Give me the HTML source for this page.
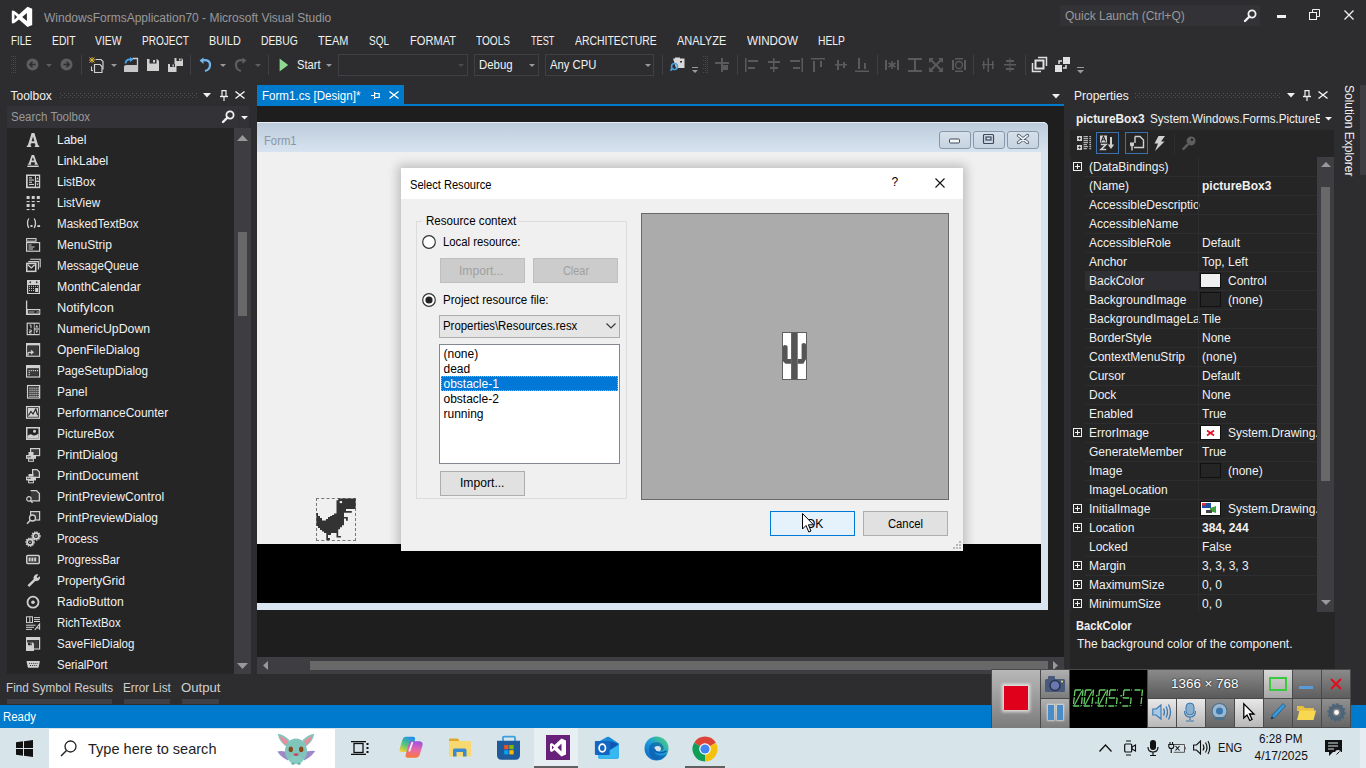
<!DOCTYPE html>
<html><head><meta charset="utf-8"><title>Visual Studio</title>
<style>
*{margin:0;padding:0;box-sizing:border-box}
html,body{width:1366px;height:768px;overflow:hidden;background:#2d2d30;font-family:"Liberation Sans",sans-serif;font-size:12px;color:#f1f1f1;position:relative}
.a{position:absolute}
.t{position:absolute;white-space:nowrap;line-height:1}
svg{position:absolute;overflow:visible}
</style></head><body>
<svg style="left:0px;top:0px;" width="40" height="30" viewBox="0 0 40 30"><path d="M11.8 11.6 Q11.8 10.6 12.9 10.6 L14.4 11 L19 14.6 L27.5 6.8 L32.2 8.8 V25.1 L27.5 27.1 L19 19.4 L14.4 23 L12.9 23.4 Q11.8 23.4 11.8 22.4 Z M14.5 14.3 V19.8 L17.1 17 Z M26.9 12.9 V21.1 L22.2 17 Z" fill="#ffffff" fill-rule="evenodd"/></svg>
<div class="t" style="left:44px;top:12.38px;font-size:12px;color:#999999;">WindowsFormsApplication70 - Microsoft Visual Studio</div>
<div class="a" style="left:1060px;top:5px;width:200px;height:21px;background:#333337;"></div>
<div class="t" style="left:1065px;top:9.58px;font-size:12px;color:#999999;">Quick Launch (Ctrl+Q)</div>
<svg style="left:1244px;top:9px;" width="13" height="13" viewBox="0 0 13 13"><circle cx="8" cy="5" r="3.6" fill="none" stroke="#f1f1f1" stroke-width="1.8"/><path d="M5.5 7.5 L1 12" stroke="#f1f1f1" stroke-width="2.4" stroke-linecap="round"/></svg>
<div class="a" style="left:1277px;top:15px;width:9px;height:3px;background:#f1f1f1;"></div>
<svg style="left:1309px;top:9px;" width="12" height="11" viewBox="0 0 12 11"><rect x="0.5" y="3.5" width="7" height="7" fill="none" stroke="#f1f1f1"/><path d="M3.5 3.5 V0.5 H10.5 V7.5 H7.5" fill="none" stroke="#f1f1f1"/></svg>
<svg style="left:1344px;top:10px;" width="10" height="10" viewBox="0 0 10 10"><path d="M0.5 0.5 L9.5 9.5 M9.5 0.5 L0.5 9.5" stroke="#f1f1f1" stroke-width="1.3"/></svg>
<div class="t" style="left:10.5px;top:34.68px;font-size:12px;color:#f1f1f1;transform:scaleX(0.813);transform-origin:0 0;">FILE</div>
<div class="t" style="left:51.5px;top:34.68px;font-size:12px;color:#f1f1f1;transform:scaleX(0.860);transform-origin:0 0;">EDIT</div>
<div class="t" style="left:94.5px;top:34.68px;font-size:12px;color:#f1f1f1;transform:scaleX(0.864);transform-origin:0 0;">VIEW</div>
<div class="t" style="left:142.1px;top:34.68px;font-size:12px;color:#f1f1f1;transform:scaleX(0.837);transform-origin:0 0;">PROJECT</div>
<div class="t" style="left:208.5px;top:34.68px;font-size:12px;color:#f1f1f1;transform:scaleX(0.897);transform-origin:0 0;">BUILD</div>
<div class="t" style="left:260.5px;top:34.68px;font-size:12px;color:#f1f1f1;transform:scaleX(0.862);transform-origin:0 0;">DEBUG</div>
<div class="t" style="left:318.1px;top:34.68px;font-size:12px;color:#f1f1f1;transform:scaleX(0.912);transform-origin:0 0;">TEAM</div>
<div class="t" style="left:369.0px;top:34.68px;font-size:12px;color:#f1f1f1;transform:scaleX(0.833);transform-origin:0 0;">SQL</div>
<div class="t" style="left:409.7px;top:34.68px;font-size:12px;color:#f1f1f1;transform:scaleX(0.924);transform-origin:0 0;">FORMAT</div>
<div class="t" style="left:476.2px;top:34.68px;font-size:12px;color:#f1f1f1;transform:scaleX(0.840);transform-origin:0 0;">TOOLS</div>
<div class="t" style="left:531.3px;top:34.68px;font-size:12px;color:#f1f1f1;transform:scaleX(0.763);transform-origin:0 0;">TEST</div>
<div class="t" style="left:574.5px;top:34.68px;font-size:12px;color:#f1f1f1;transform:scaleX(0.870);transform-origin:0 0;">ARCHITECTURE</div>
<div class="t" style="left:676.8px;top:34.68px;font-size:12px;color:#f1f1f1;transform:scaleX(0.915);transform-origin:0 0;">ANALYZE</div>
<div class="t" style="left:746.5px;top:34.68px;font-size:12px;color:#f1f1f1;transform:scaleX(0.969);transform-origin:0 0;">WINDOW</div>
<div class="t" style="left:818.1px;top:34.68px;font-size:12px;color:#f1f1f1;transform:scaleX(0.861);transform-origin:0 0;">HELP</div>
<svg style="left:11px;top:56px;" width="7" height="18" viewBox="0 0 7 18"><rect x="0" y="0" width="1" height="1" fill="#4a4a4e"/><rect x="2" y="0" width="1" height="1" fill="#4a4a4e"/><rect x="4" y="0" width="1" height="1" fill="#4a4a4e"/><rect x="2" y="2" width="1" height="1" fill="#4a4a4e"/><rect x="4" y="2" width="1" height="1" fill="#4a4a4e"/><rect x="0" y="4" width="1" height="1" fill="#4a4a4e"/><rect x="2" y="4" width="1" height="1" fill="#4a4a4e"/><rect x="4" y="4" width="1" height="1" fill="#4a4a4e"/><rect x="2" y="6" width="1" height="1" fill="#4a4a4e"/><rect x="4" y="6" width="1" height="1" fill="#4a4a4e"/><rect x="0" y="8" width="1" height="1" fill="#4a4a4e"/><rect x="2" y="8" width="1" height="1" fill="#4a4a4e"/><rect x="4" y="8" width="1" height="1" fill="#4a4a4e"/><rect x="2" y="10" width="1" height="1" fill="#4a4a4e"/><rect x="4" y="10" width="1" height="1" fill="#4a4a4e"/><rect x="0" y="12" width="1" height="1" fill="#4a4a4e"/><rect x="2" y="12" width="1" height="1" fill="#4a4a4e"/><rect x="4" y="12" width="1" height="1" fill="#4a4a4e"/><rect x="2" y="14" width="1" height="1" fill="#4a4a4e"/><rect x="4" y="14" width="1" height="1" fill="#4a4a4e"/><rect x="0" y="16" width="1" height="1" fill="#4a4a4e"/><rect x="2" y="16" width="1" height="1" fill="#4a4a4e"/><rect x="4" y="16" width="1" height="1" fill="#4a4a4e"/></svg>
<svg style="left:26px;top:58px;" width="13" height="13" viewBox="0 0 13 13"><circle cx="6.5" cy="6.5" r="6" fill="#5e5e5e"/><path d="M9.5 6.5 H4 M6.5 3.8 L3.8 6.5 L6.5 9.2" stroke="#2d2d30" stroke-width="1.6" fill="none"/></svg>
<svg style="left:46px;top:64px;" width="6" height="3" viewBox="0 0 6 3"><path d="M0 0 H6 L3 3Z" fill="#5e5e5e"/></svg>
<svg style="left:60px;top:58px;" width="13" height="13" viewBox="0 0 13 13"><circle cx="6.5" cy="6.5" r="6" fill="#5e5e5e"/><path d="M3.5 6.5 H9 M6.5 3.8 L9.2 6.5 L6.5 9.2" stroke="#2d2d30" stroke-width="1.6" fill="none"/></svg>
<div class="a" style="left:81px;top:55px;width:1px;height:20px;background:#3f3f46;"></div>
<div class="a" style="left:190px;top:55px;width:1px;height:20px;background:#3f3f46;"></div>
<div class="a" style="left:268px;top:55px;width:1px;height:20px;background:#3f3f46;"></div>
<div class="a" style="left:662px;top:55px;width:1px;height:20px;background:#3f3f46;"></div>
<div class="a" style="left:737px;top:55px;width:1px;height:20px;background:#3f3f46;"></div>
<div class="a" style="left:877px;top:55px;width:1px;height:20px;background:#3f3f46;"></div>
<div class="a" style="left:973px;top:55px;width:1px;height:20px;background:#3f3f46;"></div>
<div class="a" style="left:1025px;top:55px;width:1px;height:20px;background:#3f3f46;"></div>
<svg style="left:89px;top:57px;" width="15" height="16" viewBox="0 0 15 16"><path d="M6.5 2.5 H12 L14 4.5 V12.5" fill="none" stroke="#d0d0d0" stroke-width="1.2"/><path d="M5.5 7.5 H11 L13 9.5 V15.5 H5.5Z" fill="#2d2d30" stroke="#d0d0d0" stroke-width="1.2"/><path d="M2.5 9.5 V13.5 H4" fill="none" stroke="#d0d0d0" stroke-width="1.1"/><path d="M0.5 0.5 L5.5 5.5 M5.5 0.5 L0.5 5.5 M3 0 V6 M0 3 H6" stroke="#e8b838" stroke-width="0.9"/></svg>
<svg style="left:111px;top:64px;" width="6" height="3" viewBox="0 0 6 3"><path d="M0 0 H6 L3 3Z" fill="#999999"/></svg>
<svg style="left:124px;top:57px;" width="15" height="15" viewBox="0 0 15 15"><path d="M8.5 1.5 H13.5 V14.5" fill="none" stroke="#d0d0d0" stroke-width="1.3"/><path d="M0 9 L2 8 H14 V15 H0Z" fill="#c8c8c8"/><path d="M1.5 6.5 Q2 2 7 2.5" fill="none" stroke="#4aa8f0" stroke-width="1.8"/><path d="M6 0 L9.5 2.6 L6 5Z" fill="#4aa8f0"/></svg>
<svg style="left:147px;top:59px;" width="12" height="12" viewBox="0 0 12 12"><path d="M0 0 H10 L12 2 V12 H0Z" fill="#d0d0d0"/><rect x="2.5" y="0" width="7" height="4.5" fill="#2d2d30"/><rect x="6" y="1" width="2" height="2.5" fill="#d0d0d0"/></svg>
<svg style="left:168px;top:58px;" width="15" height="14" viewBox="0 0 15 14"><path d="M6.5 0 H13.5 L15 1.5 V8 H6.5Z" fill="#d0d0d0"/><rect x="8.5" y="0" width="5" height="3" fill="#2d2d30"/><rect x="11" y="0.5" width="1.5" height="2" fill="#d0d0d0"/><path d="M0 6 H7 L8.5 7.5 V14 H0Z" fill="#d0d0d0"/><rect x="2" y="6" width="5" height="3" fill="#2d2d30"/><rect x="4.5" y="6.5" width="1.5" height="2" fill="#d0d0d0"/></svg>
<svg style="left:199px;top:58px;" width="13" height="14" viewBox="0 0 13 14"><path d="M3 2.5 Q11.5 1 11 7.5 Q10.5 12 6 13" fill="none" stroke="#72b8ee" stroke-width="2.2"/><path d="M0.5 2.5 L4.5 -0.5 L4.5 6Z" fill="#72b8ee"/></svg>
<svg style="left:220px;top:64px;" width="6" height="3" viewBox="0 0 6 3"><path d="M0 0 H6 L3 3Z" fill="#999999"/></svg>
<svg style="left:234px;top:58px;" width="13" height="14" viewBox="0 0 13 14"><path d="M10 2.5 Q1.5 1 2 7.5 Q2.5 12 7 13" fill="none" stroke="#5e5e5e" stroke-width="2.2"/><path d="M12.5 2.5 L8.5 -0.5 L8.5 6Z" fill="#5e5e5e"/></svg>
<svg style="left:255px;top:64px;" width="6" height="3" viewBox="0 0 6 3"><path d="M0 0 H6 L3 3Z" fill="#5e5e5e"/></svg>
<svg style="left:279px;top:58px;" width="10" height="14" viewBox="0 0 10 14"><path d="M0.6 0.6 L9.2 7 L0.6 13.4Z" fill="#8fd88f"/></svg>
<div class="t" style="left:296.5px;top:59.08px;font-size:12px;color:#f1f1f1;transform:scaleX(0.927);transform-origin:0 0;">Start</div>
<svg style="left:326px;top:64px;" width="6" height="3" viewBox="0 0 6 3"><path d="M0 0 H6 L3 3Z" fill="#999999"/></svg>
<div class="a" style="left:338px;top:54px;width:130px;height:22px;background:#2d2d30;border:1px solid #3f3f46;"></div>
<div class="a" style="left:474px;top:54px;width:65px;height:22px;background:#2d2d30;border:1px solid #3f3f46;"></div>
<div class="a" style="left:545px;top:54px;width:109px;height:22px;background:#2d2d30;border:1px solid #3f3f46;"></div>
<svg style="left:458px;top:64px;" width="6" height="3" viewBox="0 0 6 3"><path d="M0 0 H6 L3 3Z" fill="#4a4a4e"/></svg>
<div class="t" style="left:479px;top:59.08px;font-size:12px;color:#f1f1f1;transform:scaleX(0.950);transform-origin:0 0;">Debug</div>
<svg style="left:529px;top:64px;" width="6" height="3" viewBox="0 0 6 3"><path d="M0 0 H6 L3 3Z" fill="#999999"/></svg>
<div class="t" style="left:549.5px;top:59.08px;font-size:12px;color:#f1f1f1;transform:scaleX(0.938);transform-origin:0 0;">Any CPU</div>
<svg style="left:645px;top:64px;" width="6" height="3" viewBox="0 0 6 3"><path d="M0 0 H6 L3 3Z" fill="#999999"/></svg>
<svg style="left:670px;top:57px;" width="15" height="15" viewBox="0 0 15 15"><path d="M3 1.5 H14.5 V11 H6" fill="#d8d8d8"/><path d="M5 0.5 H10 V3 H5Z" fill="#d8d8d8"/><rect x="10" y="4" width="2" height="1.5" fill="#2d2d30"/><circle cx="4.5" cy="9.5" r="3" fill="none" stroke="#4a9ee0" stroke-width="1.6"/><path d="M2.5 11.5 L0.5 13.5" stroke="#4a9ee0" stroke-width="2"/></svg>
<svg style="left:692px;top:67px;" width="6" height="7" viewBox="0 0 6 7"><rect x="0" y="0" width="6" height="1" fill="#999"/><path d="M0 3 H6 L3 6Z" fill="#999999"/></svg>
<svg style="left:703px;top:56px;" width="7" height="18" viewBox="0 0 7 18"><rect x="0" y="0" width="1" height="1" fill="#4a4a4e"/><rect x="2" y="0" width="1" height="1" fill="#4a4a4e"/><rect x="4" y="0" width="1" height="1" fill="#4a4a4e"/><rect x="2" y="2" width="1" height="1" fill="#4a4a4e"/><rect x="4" y="2" width="1" height="1" fill="#4a4a4e"/><rect x="0" y="4" width="1" height="1" fill="#4a4a4e"/><rect x="2" y="4" width="1" height="1" fill="#4a4a4e"/><rect x="4" y="4" width="1" height="1" fill="#4a4a4e"/><rect x="2" y="6" width="1" height="1" fill="#4a4a4e"/><rect x="4" y="6" width="1" height="1" fill="#4a4a4e"/><rect x="0" y="8" width="1" height="1" fill="#4a4a4e"/><rect x="2" y="8" width="1" height="1" fill="#4a4a4e"/><rect x="4" y="8" width="1" height="1" fill="#4a4a4e"/><rect x="2" y="10" width="1" height="1" fill="#4a4a4e"/><rect x="4" y="10" width="1" height="1" fill="#4a4a4e"/><rect x="0" y="12" width="1" height="1" fill="#4a4a4e"/><rect x="2" y="12" width="1" height="1" fill="#4a4a4e"/><rect x="4" y="12" width="1" height="1" fill="#4a4a4e"/><rect x="2" y="14" width="1" height="1" fill="#4a4a4e"/><rect x="4" y="14" width="1" height="1" fill="#4a4a4e"/><rect x="0" y="16" width="1" height="1" fill="#4a4a4e"/><rect x="2" y="16" width="1" height="1" fill="#4a4a4e"/><rect x="4" y="16" width="1" height="1" fill="#4a4a4e"/></svg>
<svg style="left:715px;top:58px;" width="14" height="14" viewBox="0 0 14 14"><rect x="6" y="0" width="2" height="14" fill="#5a5a5a"/><rect x="0" y="4" width="14" height="2" fill="#5a5a5a"/><rect x="8" y="7" width="5" height="5" fill="#5a5a5a"/></svg>
<svg style="left:745px;top:58px;" width="14" height="14" viewBox="0 0 14 14"><rect x="0" y="0" width="1.5" height="14" fill="#5a5a5a"/><rect x="3" y="2" width="10" height="2" fill="#5a5a5a"/><rect x="3" y="9" width="7" height="2" fill="#5a5a5a"/></svg>
<svg style="left:767px;top:58px;" width="14" height="14" viewBox="0 0 14 14"><rect x="6" y="0" width="1.5" height="14" fill="#5a5a5a"/><rect x="1" y="3" width="12" height="2" fill="#5a5a5a"/><rect x="3" y="9" width="8" height="2" fill="#5a5a5a"/></svg>
<svg style="left:789px;top:58px;" width="14" height="14" viewBox="0 0 14 14"><rect x="12.5" y="0" width="1.5" height="14" fill="#5a5a5a"/><rect x="1" y="2" width="10" height="2" fill="#5a5a5a"/><rect x="4" y="9" width="7" height="2" fill="#5a5a5a"/></svg>
<svg style="left:811px;top:58px;" width="14" height="14" viewBox="0 0 14 14"><rect x="0" y="0" width="14" height="1.5" fill="#5a5a5a"/><rect x="2" y="3" width="2" height="11" fill="#5a5a5a"/><rect x="9" y="3" width="2" height="6" fill="#5a5a5a"/></svg>
<svg style="left:835px;top:58px;" width="12" height="14" viewBox="0 0 12 14"><rect x="0" y="6" width="12" height="1.5" fill="#5a5a5a"/><rect x="2" y="2" width="2" height="10" fill="#5a5a5a"/><rect x="8" y="4" width="2" height="6" fill="#5a5a5a"/></svg>
<svg style="left:855px;top:58px;" width="14" height="14" viewBox="0 0 14 14"><rect x="0" y="12.5" width="14" height="1.5" fill="#5a5a5a"/><rect x="3" y="0" width="2" height="11" fill="#5a5a5a"/><rect x="9" y="5" width="2" height="6" fill="#5a5a5a"/></svg>
<svg style="left:885px;top:58px;" width="14" height="14" viewBox="0 0 14 14"><rect x="0" y="2" width="2" height="10" fill="#5a5a5a"/><rect x="12" y="2" width="2" height="10" fill="#5a5a5a"/><path d="M7 3 V11 M3.5 5 L10.5 9 M10.5 5 L3.5 9" stroke="#5a5a5a" stroke-width="1.6"/></svg>
<svg style="left:908px;top:58px;" width="14" height="14" viewBox="0 0 14 14"><rect x="0" y="0" width="14" height="2" fill="#5a5a5a"/><rect x="0" y="12" width="14" height="2" fill="#5a5a5a"/><rect x="6" y="2" width="2" height="10" fill="#5a5a5a"/></svg>
<svg style="left:929px;top:58px;" width="14" height="14" viewBox="0 0 14 14"><path d="M1 1 L13 13 M13 1 L1 13" stroke="#5a5a5a" stroke-width="2"/><path d="M0 0 H5 L0 5Z M14 0 V5 L9 0Z M0 14 V9 L5 14Z M14 14 H9 L14 9Z" fill="#5a5a5a"/></svg>
<svg style="left:952px;top:58px;" width="14" height="14" viewBox="0 0 14 14"><rect x="0" y="2" width="2" height="10" fill="#5a5a5a"/><rect x="12" y="2" width="2" height="10" fill="#5a5a5a"/><rect x="3" y="0" width="8" height="1.5" fill="#5a5a5a"/><rect x="3" y="12.5" width="8" height="1.5" fill="#5a5a5a"/><circle cx="7" cy="7" r="3.5" fill="none" stroke="#5a5a5a" stroke-width="1.3"/></svg>
<svg style="left:982px;top:58px;" width="12" height="14" viewBox="0 0 12 14"><rect x="5.5" y="0" width="1.5" height="14" fill="#5a5a5a"/><rect x="1" y="3" width="1.5" height="8" fill="#5a5a5a"/><rect x="10" y="3" width="1.5" height="8" fill="#5a5a5a"/><rect x="0" y="6" width="12" height="1.2" fill="#5a5a5a"/></svg>
<svg style="left:1004px;top:58px;" width="12" height="14" viewBox="0 0 12 14"><rect x="0" y="6" width="12" height="1.5" fill="#5a5a5a"/><rect x="2" y="2" width="8" height="2" fill="#5a5a5a"/><rect x="2" y="10" width="8" height="2" fill="#5a5a5a"/><rect x="5.5" y="0" width="1" height="14" fill="#5a5a5a"/></svg>
<svg style="left:1032px;top:57px;" width="15" height="15" viewBox="0 0 15 15"><rect x="3.5" y="3.5" width="8" height="8" fill="none" stroke="#e0e0e0" stroke-width="2"/><path d="M6 0.5 H14.5 V9" fill="none" stroke="#e0e0e0" stroke-width="1.5"/><path d="M0.5 6 V14.5 H9" fill="none" stroke="#e0e0e0" stroke-width="1.5"/></svg>
<svg style="left:1055px;top:57px;" width="15" height="15" viewBox="0 0 15 15"><rect x="8" y="0" width="7" height="7" fill="#e0e0e0"/><rect x="0" y="8" width="7" height="7" fill="#e0e0e0"/><path d="M4 7 V4 H7 M8 11 H11 V8" fill="none" stroke="#e0e0e0" stroke-width="1.5"/></svg>
<svg style="left:1077px;top:67px;" width="7" height="7" viewBox="0 0 7 7"><rect x="0" y="0" width="7" height="1" fill="#999"/><path d="M0 3 H7 L3.5 6.5Z" fill="#999999"/></svg>
<div class="t" style="left:10.5px;top:90.08px;font-size:12px;color:#f1f1f1;">Toolbox</div>
<svg style="left:60px;top:93px" width="137" height="5"><defs><pattern id="gp1" x="0" y="0" width="4" height="4" patternUnits="userSpaceOnUse"><rect x="0" y="0" width="1" height="1" fill="#55555a"/><rect x="2" y="2" width="1" height="1" fill="#55555a"/></pattern></defs><rect x="0" y="0" width="137" height="5" fill="url(#gp1)"/></svg>
<svg style="left:203px;top:93px;" width="8" height="5" viewBox="0 0 8 5"><path d="M0 0 H8 L4 4.5Z" fill="#f1f1f1"/></svg>
<svg style="left:220px;top:90px;" width="8" height="11" viewBox="0 0 8 11"><path d="M2 0.6 H6 V6.5 H2Z" fill="none" stroke="#f1f1f1" stroke-width="1.2"/><rect x="0" y="5.8" width="8" height="1.4" fill="#f1f1f1"/><rect x="3.4" y="7" width="1.2" height="4" fill="#f1f1f1"/></svg>
<svg style="left:235px;top:91px;" width="10" height="8" viewBox="0 0 10 8"><path d="M0.5 0.5 L9.5 7.5 M9.5 0.5 L0.5 7.5" stroke="#f1f1f1" stroke-width="1.5"/></svg>
<div class="a" style="left:7px;top:106px;width:242px;height:22px;background:#333337;"></div>
<div class="t" style="left:11px;top:111.08px;font-size:12px;color:#999999;transform:scaleX(0.958);transform-origin:0 0;">Search Toolbox</div>
<svg style="left:222px;top:110px;" width="13" height="13" viewBox="0 0 13 13"><circle cx="8" cy="5" r="3.6" fill="none" stroke="#f1f1f1" stroke-width="1.8"/><path d="M5.5 7.5 L1 12" stroke="#f1f1f1" stroke-width="2.4" stroke-linecap="round"/></svg>
<div class="a" style="left:238px;top:108px;width:1px;height:18px;background:#2d2d30;"></div>
<svg style="left:241px;top:116px;" width="7" height="4" viewBox="0 0 7 4"><path d="M0 0 H7 L3.5 3.5Z" fill="#f1f1f1"/></svg>
<div class="a" style="left:7px;top:128px;width:227px;height:546px;background:#252526;overflow:hidden">
<svg style="left:19px;top:4px" width="14" height="14" viewBox="0 0 14 14"><path d="M0.8 15 V13.6 H1.8 L5.6 1 H8.4 L12.2 13.6 H13.2 V15 H8.8 V13.6 H9.6 L8.9 11.2 H5.1 L4.4 13.6 H5.2 V15Z M5.6 9.2 H8.4 L7 4.4Z" fill="#d0d0d0" fill-rule="evenodd"/></svg>
<div class="t" style="left:50px;top:6.08px;font-size:12px;color:#f1f1f1;transform:scaleX(1.0);transform-origin:0 0">Label</div>
<svg style="left:19px;top:25px" width="14" height="14" viewBox="0 0 14 14"><path d="M1.8 11.8 V10.8 H2.6 L5.7 2 H8.1 L11.2 10.8 H12 V11.8 H8.6 V10.8 H9.1 L8.6 9.2 H5.2 L4.7 10.8 H5.2 V11.8Z M5.7 7.6 H8.1 L6.9 3.9Z" fill="#d0d0d0" fill-rule="evenodd"/><rect x="1.3" y="12.6" width="11.4" height="1.4" fill="#d0d0d0"/></svg>
<div class="t" style="left:50px;top:27.08px;font-size:12px;color:#f1f1f1;transform:scaleX(0.998);transform-origin:0 0">LinkLabel</div>
<svg style="left:19px;top:46px" width="14" height="14" viewBox="0 0 14 14"><rect x="0" y="0.5" width="14.2" height="13.7" fill="#d0d0d0"/><rect x="1.7" y="2" width="7.2" height="10.6" fill="#252526"/><rect x="3" y="3.3" width="3" height="1.1" fill="#d0d0d0"/><rect x="3" y="5.5" width="5" height="1.1" fill="#d0d0d0"/><rect x="3" y="7.7" width="3" height="1.1" fill="#d0d0d0"/><rect x="3" y="9.9" width="5" height="1.1" fill="#d0d0d0"/><rect x="10" y="2" width="2.9" height="4.6" fill="#252526"/><rect x="10" y="8" width="2.9" height="4.6" fill="#252526"/><path d="M10.3 5.2 L11.45 3.2 L12.6 5.2Z M10.3 9.4 L11.45 11.4 L12.6 9.4Z" fill="#d0d0d0"/></svg>
<div class="t" style="left:50px;top:48.08px;font-size:12px;color:#f1f1f1;transform:scaleX(0.973);transform-origin:0 0">ListBox</div>
<svg style="left:19px;top:67px" width="14" height="14" viewBox="0 0 14 14"><rect x="0.6" y="1" width="3" height="3" fill="#d0d0d0"/><rect x="0.6" y="6" width="3" height="1.1" fill="#d0d0d0"/><rect x="5.699999999999999" y="1" width="3" height="3" fill="#d0d0d0"/><rect x="5.699999999999999" y="6" width="3" height="1.1" fill="#d0d0d0"/><rect x="10.799999999999999" y="1" width="3" height="3" fill="#d0d0d0"/><rect x="10.799999999999999" y="6" width="3" height="1.1" fill="#d0d0d0"/><rect x="0.6" y="9" width="3" height="3" fill="#d0d0d0"/><rect x="0.6" y="14" width="3" height="1.1" fill="#d0d0d0"/><rect x="5.699999999999999" y="9" width="3" height="3" fill="#d0d0d0"/><rect x="5.699999999999999" y="14" width="3" height="1.1" fill="#d0d0d0"/></svg>
<div class="t" style="left:50px;top:69.08px;font-size:12px;color:#f1f1f1;transform:scaleX(0.968);transform-origin:0 0">ListView</div>
<svg style="left:19px;top:88px" width="14" height="14" viewBox="0 0 14 14"><path d="M2.8 2.5 Q0.2 7 2.8 12" fill="none" stroke="#d0d0d0" stroke-width="1.3"/><path d="M8.2 2.5 Q10.8 7 8.2 12" fill="none" stroke="#d0d0d0" stroke-width="1.3"/><rect x="4.5" y="9" width="2" height="2" fill="#d0d0d0"/><rect x="11.3" y="9.2" width="2.8" height="1.8" fill="#d0d0d0"/></svg>
<div class="t" style="left:50px;top:90.08px;font-size:12px;color:#f1f1f1;transform:scaleX(0.963);transform-origin:0 0">MaskedTextBox</div>
<svg style="left:19px;top:109px" width="14" height="14" viewBox="0 0 14 14"><rect x="0.6" y="1.6" width="9.4" height="2.6" fill="none" stroke="#d0d0d0" stroke-width="1.1"/><rect x="0.6" y="5.6" width="13" height="8.6" fill="none" stroke="#d0d0d0" stroke-width="1.2"/><rect x="2.5" y="7.5" width="3" height="1" fill="#d0d0d0"/><rect x="2.5" y="9.5" width="6" height="1" fill="#d0d0d0"/><rect x="2.5" y="11.5" width="4.5" height="1" fill="#d0d0d0"/></svg>
<div class="t" style="left:50px;top:111.08px;font-size:12px;color:#f1f1f1;transform:scaleX(1.004);transform-origin:0 0">MenuStrip</div>
<svg style="left:19px;top:130px" width="14" height="14" viewBox="0 0 14 14"><path d="M4.2 1.2 H14.2 V9.4 M2.2 3.6 H12.4 V11.4" fill="none" stroke="#d0d0d0" stroke-width="1.1"/><rect x="0" y="4.7" width="10.5" height="9.4" fill="#d0d0d0"/><rect x="1.5" y="6.2" width="7.5" height="6.4" fill="#252526"/><path d="M1.8 6.8 L5.25 10 L8.7 6.8" fill="none" stroke="#d0d0d0" stroke-width="1.2"/></svg>
<div class="t" style="left:50px;top:132.08px;font-size:12px;color:#f1f1f1;transform:scaleX(0.963);transform-origin:0 0">MessageQueue</div>
<svg style="left:19px;top:151px" width="14" height="14" viewBox="0 0 14 14"><rect x="1" y="1" width="13" height="14" fill="#d0d0d0"/><rect x="2.2" y="6" width="10.6" height="8" fill="#252526"/><path d="M3 3.3 L5 2 V4.6Z M12 3.3 L10 2 V4.6Z" fill="#3a3a3a"/><rect x="3" y="6.8" width="1" height="1" fill="#d0d0d0"/><rect x="3" y="8.9" width="1" height="1" fill="#d0d0d0"/><rect x="3" y="11.0" width="1" height="1" fill="#d0d0d0"/><rect x="5" y="6.8" width="1" height="1" fill="#d0d0d0"/><rect x="5" y="8.9" width="1" height="1" fill="#d0d0d0"/><rect x="5" y="11.0" width="1" height="1" fill="#d0d0d0"/><rect x="7" y="6.8" width="1" height="1" fill="#d0d0d0"/><rect x="7" y="8.9" width="1" height="1" fill="#d0d0d0"/><rect x="7" y="11.0" width="1" height="1" fill="#d0d0d0"/><rect x="9" y="6.8" width="1" height="1" fill="#d0d0d0"/><rect x="11" y="6.8" width="1" height="1" fill="#d0d0d0"/><rect x="9.2" y="9" width="3" height="4" fill="#d0d0d0"/></svg>
<div class="t" style="left:50px;top:153.08px;font-size:12px;color:#f1f1f1;transform:scaleX(1.021);transform-origin:0 0">MonthCalendar</div>
<svg style="left:19px;top:172px" width="14" height="14" viewBox="0 0 14 14"><path d="M0.6 0.5 V14.4 H14" fill="none" stroke="#d0d0d0" stroke-width="1.3"/><rect x="1.3" y="9.6" width="12.4" height="4.6" fill="none" stroke="#d0d0d0" stroke-width="1.2"/><rect x="2.5" y="11" width="6" height="2" fill="#6a6a6a"/><rect x="10.5" y="11" width="3" height="2" fill="#6a6a6a"/></svg>
<div class="t" style="left:50px;top:174.08px;font-size:12px;color:#f1f1f1;transform:scaleX(1.064);transform-origin:0 0">NotifyIcon</div>
<svg style="left:19px;top:193px" width="14" height="14" viewBox="0 0 14 14"><rect x="0.6" y="1.6" width="13" height="12.6" fill="#d0d0d0"/><rect x="1.8" y="2.8" width="6" height="10.2" fill="#252526"/><rect x="8.6" y="2.8" width="4.4" height="4.6" fill="#252526"/><rect x="8.6" y="8.6" width="4.4" height="4.4" fill="#252526"/><path d="M3.6 4 H5 V7.2 M3.3 9 H5.3 V10.6 H3.5 V12 H5.5" fill="none" stroke="#d0d0d0" stroke-width="1"/><path d="M9.4 6.4 L10.8 3.8 L12.2 6.4Z M9.4 9.6 L10.8 12.2 L12.2 9.6Z" fill="#d0d0d0"/></svg>
<div class="t" style="left:50px;top:195.08px;font-size:12px;color:#f1f1f1;transform:scaleX(1.027);transform-origin:0 0">NumericUpDown</div>
<svg style="left:19px;top:214px" width="14" height="14" viewBox="0 0 14 14"><rect x="0.6" y="1.6" width="13" height="12.6" fill="none" stroke="#d0d0d0" stroke-width="1.2"/><rect x="0.6" y="1.6" width="13" height="2" fill="#d0d0d0"/><rect x="1.8" y="3.6" width="10.6" height="9.4" fill="#3a3a3a"/><path d="M2 13.5 V11.3 Q2 10.3 3 10.3 H6.5 M5 8.6 L7 10.3 L5 12" fill="none" stroke="#d0d0d0" stroke-width="1.3"/></svg>
<div class="t" style="left:50px;top:216.08px;font-size:12px;color:#f1f1f1;transform:scaleX(0.999);transform-origin:0 0">OpenFileDialog</div>
<svg style="left:19px;top:235px" width="14" height="14" viewBox="0 0 14 14"><rect x="0.6" y="2.6" width="13" height="11.4" fill="none" stroke="#d0d0d0" stroke-width="1.2"/><rect x="0.6" y="2.6" width="13" height="2.8" fill="#d0d0d0"/><rect x="1.8" y="5.4" width="10.6" height="7.4" fill="#3a3a3a"/><rect x="2.6" y="7" width="1.2" height="1.2" fill="#d0d0d0"/><rect x="4.7" y="7" width="1.2" height="1.2" fill="#d0d0d0"/><rect x="6.800000000000001" y="7" width="1.2" height="1.2" fill="#d0d0d0"/><rect x="8.9" y="7" width="1.2" height="1.2" fill="#d0d0d0"/><rect x="11.0" y="7" width="1.2" height="1.2" fill="#d0d0d0"/><rect x="2.6" y="9" width="1.2" height="1.2" fill="#d0d0d0"/><rect x="2.6" y="11" width="1.2" height="1.2" fill="#d0d0d0"/></svg>
<div class="t" style="left:50px;top:237.08px;font-size:12px;color:#f1f1f1;transform:scaleX(0.974);transform-origin:0 0">PageSetupDialog</div>
<svg style="left:19px;top:256px" width="14" height="14" viewBox="0 0 14 14"><rect x="1.6" y="1.6" width="12" height="12.4" fill="none" stroke="#d0d0d0" stroke-width="1.3"/><rect x="2.3" y="2.3" width="10.6" height="11" fill="#3a3a3a"/><rect x="3.4" y="3.6" width="1.2" height="1.2" fill="#d0d0d0"/><rect x="3.4" y="5.65" width="1.2" height="1.2" fill="#d0d0d0"/><rect x="3.4" y="7.699999999999999" width="1.2" height="1.2" fill="#d0d0d0"/><rect x="3.4" y="9.75" width="1.2" height="1.2" fill="#d0d0d0"/><rect x="3.4" y="11.799999999999999" width="1.2" height="1.2" fill="#d0d0d0"/><rect x="5.449999999999999" y="3.6" width="1.2" height="1.2" fill="#d0d0d0"/><rect x="5.449999999999999" y="5.65" width="1.2" height="1.2" fill="#d0d0d0"/><rect x="5.449999999999999" y="7.699999999999999" width="1.2" height="1.2" fill="#d0d0d0"/><rect x="5.449999999999999" y="9.75" width="1.2" height="1.2" fill="#d0d0d0"/><rect x="5.449999999999999" y="11.799999999999999" width="1.2" height="1.2" fill="#d0d0d0"/><rect x="7.5" y="3.6" width="1.2" height="1.2" fill="#d0d0d0"/><rect x="7.5" y="5.65" width="1.2" height="1.2" fill="#d0d0d0"/><rect x="7.5" y="7.699999999999999" width="1.2" height="1.2" fill="#d0d0d0"/><rect x="7.5" y="9.75" width="1.2" height="1.2" fill="#d0d0d0"/><rect x="7.5" y="11.799999999999999" width="1.2" height="1.2" fill="#d0d0d0"/><rect x="9.549999999999999" y="3.6" width="1.2" height="1.2" fill="#d0d0d0"/><rect x="9.549999999999999" y="5.65" width="1.2" height="1.2" fill="#d0d0d0"/><rect x="9.549999999999999" y="7.699999999999999" width="1.2" height="1.2" fill="#d0d0d0"/><rect x="9.549999999999999" y="9.75" width="1.2" height="1.2" fill="#d0d0d0"/><rect x="9.549999999999999" y="11.799999999999999" width="1.2" height="1.2" fill="#d0d0d0"/><rect x="11.6" y="3.6" width="1.2" height="1.2" fill="#d0d0d0"/><rect x="11.6" y="5.65" width="1.2" height="1.2" fill="#d0d0d0"/><rect x="11.6" y="7.699999999999999" width="1.2" height="1.2" fill="#d0d0d0"/><rect x="11.6" y="9.75" width="1.2" height="1.2" fill="#d0d0d0"/><rect x="11.6" y="11.799999999999999" width="1.2" height="1.2" fill="#d0d0d0"/></svg>
<div class="t" style="left:50px;top:258.08px;font-size:12px;color:#f1f1f1;transform:scaleX(0.989);transform-origin:0 0">Panel</div>
<svg style="left:19px;top:277px" width="14" height="14" viewBox="0 0 14 14"><rect x="0.6" y="1.6" width="12.8" height="11.6" fill="none" stroke="#d0d0d0" stroke-width="1.3"/><rect x="2" y="3" width="10" height="8.8" fill="#d0d0d0"/><path d="M2.4 10.5 L5 6.5 L7 9 L9.8 4 L11.6 10" fill="none" stroke="#252526" stroke-width="1.2"/></svg>
<div class="t" style="left:50px;top:279.08px;font-size:12px;color:#f1f1f1;transform:scaleX(0.999);transform-origin:0 0">PerformanceCounter</div>
<svg style="left:19px;top:298px" width="14" height="14" viewBox="0 0 14 14"><rect x="0.75" y="1.75" width="12.5" height="11.5" fill="none" stroke="#d0d0d0" stroke-width="1.5"/><circle cx="8.5" cy="5.3" r="1.5" fill="#d0d0d0"/><path d="M1.5 10 Q4 7 6.5 9 Q9 10.5 12.5 7.5 V12.5 H1.5Z" fill="#d0d0d0"/></svg>
<div class="t" style="left:50px;top:300.08px;font-size:12px;color:#f1f1f1;transform:scaleX(0.986);transform-origin:0 0">PictureBox</div>
<svg style="left:19px;top:319px" width="14" height="14" viewBox="0 0 14 14"><rect x="4.6" y="1.6" width="9" height="7" fill="#3a3a3a" stroke="#d0d0d0" stroke-width="1.2"/><rect x="2.5" y="5" width="5" height="3" fill="#d0d0d0"/><rect x="0" y="8" width="10" height="3.8" fill="#d0d0d0"/><rect x="1.3" y="9.2" width="1.2" height="1.2" fill="#252526"/><rect x="3.3" y="9.2" width="1.2" height="1.2" fill="#252526"/><rect x="2.6" y="11.8" width="4.8" height="2.5" fill="none" stroke="#d0d0d0" stroke-width="1"/></svg>
<div class="t" style="left:50px;top:321.08px;font-size:12px;color:#f1f1f1;transform:scaleX(1.032);transform-origin:0 0">PrintDialog</div>
<svg style="left:19px;top:340px" width="14" height="14" viewBox="0 0 14 14"><path d="M6.6 7 V1.6 H11 L13.4 4 V9.4 H10" fill="#3a3a3a" stroke="#d0d0d0" stroke-width="1.2"/><rect x="2.5" y="6" width="5" height="2.6" fill="#d0d0d0"/><rect x="0" y="8.6" width="10" height="3.8" fill="#d0d0d0"/><rect x="1.3" y="9.8" width="1.2" height="1.2" fill="#252526"/><rect x="3.3" y="9.8" width="1.2" height="1.2" fill="#252526"/><rect x="2.6" y="12.4" width="4.8" height="2.4" fill="none" stroke="#d0d0d0" stroke-width="1"/></svg>
<div class="t" style="left:50px;top:342.08px;font-size:12px;color:#f1f1f1;transform:scaleX(1.027);transform-origin:0 0">PrintDocument</div>
<svg style="left:19px;top:361px" width="14" height="14" viewBox="0 0 14 14"><path d="M4.6 1.6 H10.5 L13.4 4.5 V11.8 H5.5" fill="#3a3a3a" stroke="#d0d0d0" stroke-width="1.3"/><circle cx="2.9" cy="9.9" r="2.2" fill="#252526" stroke="#d0d0d0" stroke-width="1.2"/><path d="M4.5 11.6 L6.6 13.8" stroke="#d0d0d0" stroke-width="1.5"/></svg>
<div class="t" style="left:50px;top:363.08px;font-size:12px;color:#f1f1f1;transform:scaleX(1.01);transform-origin:0 0">PrintPreviewControl</div>
<svg style="left:19px;top:382px" width="14" height="14" viewBox="0 0 14 14"><rect x="4.6" y="1.6" width="9" height="8.4" fill="#3a3a3a" stroke="#d0d0d0" stroke-width="1.2"/><circle cx="6.5" cy="8" r="3" fill="#252526" stroke="#d0d0d0" stroke-width="1.3"/><path d="M4.3 10.3 L1 13.8" stroke="#d0d0d0" stroke-width="1.5"/></svg>
<div class="t" style="left:50px;top:384.08px;font-size:12px;color:#f1f1f1;transform:scaleX(0.996);transform-origin:0 0">PrintPreviewDialog</div>
<svg style="left:19px;top:403px" width="14" height="14" viewBox="0 0 14 14"><circle cx="10" cy="5" r="2.9" fill="none" stroke="#d0d0d0" stroke-width="1.8"/><circle cx="10" cy="5" r="4" fill="none" stroke="#d0d0d0" stroke-width="1.4" stroke-dasharray="1.3 1.05"/><circle cx="4" cy="11.2" r="2.9" fill="none" stroke="#d0d0d0" stroke-width="1.8"/><circle cx="4" cy="11.2" r="4" fill="none" stroke="#d0d0d0" stroke-width="1.4" stroke-dasharray="1.3 1.05"/><circle cx="10" cy="5" r="0.8" fill="#d0d0d0"/><circle cx="4" cy="11.2" r="0.8" fill="#d0d0d0"/></svg>
<div class="t" style="left:50px;top:405.08px;font-size:12px;color:#f1f1f1;transform:scaleX(0.952);transform-origin:0 0">Process</div>
<svg style="left:19px;top:424px" width="14" height="14" viewBox="0 0 14 14"><rect x="0.75" y="3.55" width="12.5" height="8" rx="1" fill="none" stroke="#d0d0d0" stroke-width="1.5"/><rect x="2.2" y="5" width="9.6" height="5.1" fill="#3a3a3a"/><rect x="2.6" y="5.6" width="2" height="3.8" fill="#d0d0d0"/><rect x="5.4" y="5.6" width="2" height="3.8" fill="#d0d0d0"/><rect x="8.2" y="5.6" width="2" height="3.8" fill="#d0d0d0"/></svg>
<div class="t" style="left:50px;top:426.08px;font-size:12px;color:#f1f1f1;transform:scaleX(0.942);transform-origin:0 0">ProgressBar</div>
<svg style="left:19px;top:445px" width="14" height="14" viewBox="0 0 14 14"><path d="M12.3 1.5 A3.8 3.8 0 0 0 7.6 6.2 L1.5 12.3 L3.2 14 L9.3 7.9 A3.8 3.8 0 0 0 14 3.2 L11.6 4.9 L10.6 3.9Z" fill="#d0d0d0"/></svg>
<div class="t" style="left:50px;top:447.08px;font-size:12px;color:#f1f1f1;transform:scaleX(0.997);transform-origin:0 0">PropertyGrid</div>
<svg style="left:19px;top:466px" width="14" height="14" viewBox="0 0 14 14"><circle cx="7" cy="8.2" r="5.5" fill="none" stroke="#d0d0d0" stroke-width="1.8"/><circle cx="7" cy="8.2" r="1.8" fill="#d0d0d0"/></svg>
<div class="t" style="left:50px;top:468.08px;font-size:12px;color:#f1f1f1;transform:scaleX(1.009);transform-origin:0 0">RadioButton</div>
<svg style="left:19px;top:487px" width="14" height="14" viewBox="0 0 14 14"><rect x="0.5" y="1.8" width="6" height="5.8" fill="none" stroke="#d0d0d0" stroke-width="1"/><rect x="3.3" y="1.8" width="1" height="5.8" fill="#d0d0d0"/><rect x="8" y="2.1" width="6" height="1" fill="#d0d0d0"/><rect x="8" y="4.1" width="6" height="1" fill="#d0d0d0"/><rect x="8" y="6" width="6" height="1" fill="#d0d0d0"/><rect x="0" y="9.7" width="9.6" height="1" fill="#d0d0d0"/><rect x="0" y="11.8" width="8" height="1" fill="#d0d0d0"/><rect x="0" y="13.9" width="6" height="1" fill="#d0d0d0"/><path d="M8.8 14.8 L13.6 9 V14.8 M11 13 H13.6" fill="none" stroke="#d0d0d0" stroke-width="1.1"/></svg>
<div class="t" style="left:50px;top:489.08px;font-size:12px;color:#f1f1f1;transform:scaleX(0.954);transform-origin:0 0">RichTextBox</div>
<svg style="left:19px;top:508px" width="14" height="14" viewBox="0 0 14 14"><rect x="0.6" y="1.6" width="13" height="11.4" fill="none" stroke="#d0d0d0" stroke-width="1.2"/><rect x="0.6" y="1.6" width="13" height="2.4" fill="#d0d0d0"/><rect x="1.8" y="4" width="10.6" height="8" fill="#3a3a3a"/><path d="M0 6.6 H7 L8 7.6 V15 H0Z" fill="#d0d0d0"/><rect x="2" y="6.6" width="4" height="2.6" fill="#252526"/><rect x="4.5" y="7" width="1" height="1.6" fill="#d0d0d0"/></svg>
<div class="t" style="left:50px;top:510.08px;font-size:12px;color:#f1f1f1;transform:scaleX(0.959);transform-origin:0 0">SaveFileDialog</div>
<svg style="left:19px;top:529px" width="14" height="14" viewBox="0 0 14 14"><path d="M1 4 H13.4 Q14 4 13.8 4.8 L12.6 10.2 Q12.4 10.8 11.8 10.8 H2.6 Q2 10.8 1.8 10.2 L0.6 4.8 Q0.5 4 1 4Z" fill="#d0d0d0"/><rect x="3.0" y="5.9" width="1" height="1" fill="#3a3a3a"/><rect x="4.9" y="5.9" width="1" height="1" fill="#3a3a3a"/><rect x="6.8" y="5.9" width="1" height="1" fill="#3a3a3a"/><rect x="8.7" y="5.9" width="1" height="1" fill="#3a3a3a"/><rect x="10.6" y="5.9" width="1" height="1" fill="#3a3a3a"/><rect x="4.0" y="8" width="1" height="1" fill="#3a3a3a"/><rect x="5.9" y="8" width="1" height="1" fill="#3a3a3a"/><rect x="7.8" y="8" width="1" height="1" fill="#3a3a3a"/><rect x="9.7" y="8" width="1" height="1" fill="#3a3a3a"/></svg>
<div class="t" style="left:50px;top:531.08px;font-size:12px;color:#f1f1f1;transform:scaleX(0.957);transform-origin:0 0">SerialPort</div>
</div>
<div class="a" style="left:234px;top:128px;width:17px;height:546px;background:#3e3e42;"></div>
<div class="a" style="left:238px;top:232px;width:9px;height:84px;background:#686868;"></div>
<svg style="left:237px;top:135px;" width="10" height="6" viewBox="0 0 10 6"><path d="M0 6 L5.5 0 L11 6Z" fill="#999999"/></svg>
<svg style="left:237px;top:663px;" width="10" height="5" viewBox="0 0 10 5"><path d="M0 0 L5.5 6 L11 0Z" fill="#999999"/></svg>
<div class="t" style="left:1074px;top:90.08px;font-size:12px;color:#f1f1f1;">Properties</div>
<svg style="left:1135px;top:93px" width="145" height="5"><defs><pattern id="gp2" x="0" y="0" width="4" height="4" patternUnits="userSpaceOnUse"><rect x="0" y="0" width="1" height="1" fill="#55555a"/><rect x="2" y="2" width="1" height="1" fill="#55555a"/></pattern></defs><rect x="0" y="0" width="145" height="5" fill="url(#gp2)"/></svg>
<svg style="left:1287px;top:93px;" width="8" height="5" viewBox="0 0 8 5"><path d="M0 0 H8 L4 4.5Z" fill="#f1f1f1"/></svg>
<svg style="left:1303px;top:90px;" width="8" height="11" viewBox="0 0 8 11"><path d="M2 0.6 H6 V6.5 H2Z" fill="none" stroke="#f1f1f1" stroke-width="1.2"/><rect x="0" y="5.8" width="8" height="1.4" fill="#f1f1f1"/><rect x="3.4" y="7" width="1.2" height="4" fill="#f1f1f1"/></svg>
<svg style="left:1318px;top:91px;" width="10" height="8" viewBox="0 0 10 8"><path d="M0.5 0.5 L9.5 7.5 M9.5 0.5 L0.5 7.5" stroke="#f1f1f1" stroke-width="1.5"/></svg>
<div class="t" style="left:1076px;top:113.08px;font-size:12px;color:#f1f1f1;font-weight:bold;transform:scaleX(0.988);transform-origin:0 0;">pictureBox3</div>
<div class="a" style="left:1150px;top:108px;width:170px;height:20px;overflow:hidden">
<div class="t" style="left:0;top:5.08px;font-size:12px;color:#f1f1f1;transform:scaleX(0.97);transform-origin:0 0">System.Windows.Forms.PictureBox</div>
</div>
<svg style="left:1325px;top:117px;" width="7" height="4" viewBox="0 0 7 4"><path d="M0 0 H7 L3.5 3.5Z" fill="#f1f1f1"/></svg>
<div class="a" style="left:1070px;top:130px;width:264px;height:27px;background:#252526;"></div>
<svg style="left:1076px;top:135px;" width="16" height="16" viewBox="0 0 16 16"><rect x="1" y="1" width="5" height="5" fill="#d0d0d0"/><path d="M3.5 2.3 V4.7 M2.3 3.5 H4.7" stroke="#252526" stroke-width="0.9"/><rect x="1" y="10" width="5" height="5" fill="#d0d0d0"/><path d="M3.5 11.3 V13.7 M2.3 12.5 H4.7" stroke="#252526" stroke-width="0.9"/><rect x="7.5" y="1.2" width="4.5" height="1" fill="#d0d0d0"/><rect x="13.3" y="1.2" width="1.8" height="1" fill="#d0d0d0"/><rect x="7.5" y="3.2" width="4.5" height="1" fill="#d0d0d0"/><rect x="13.3" y="3.2" width="1.8" height="1" fill="#d0d0d0"/><rect x="7.5" y="5.2" width="4.5" height="1" fill="#d0d0d0"/><rect x="13.3" y="5.2" width="1.8" height="1" fill="#d0d0d0"/><rect x="7.5" y="7.2" width="4.5" height="1" fill="#d0d0d0"/><rect x="13.3" y="7.2" width="1.8" height="1" fill="#d0d0d0"/><rect x="7.5" y="9.2" width="3.5" height="1" fill="#d0d0d0"/><rect x="13.3" y="9.2" width="1.8" height="1" fill="#d0d0d0"/><rect x="7.5" y="11.2" width="4.5" height="1" fill="#d0d0d0"/><rect x="13.3" y="11.2" width="1.8" height="1" fill="#d0d0d0"/><rect x="7.5" y="13.2" width="3.5" height="1" fill="#d0d0d0"/><rect x="13.3" y="13.2" width="1.8" height="1" fill="#d0d0d0"/></svg>
<div class="a" style="left:1096px;top:132px;width:23px;height:22px;background:transparent;border:1px solid #3a72b0;"></div>
<svg style="left:1099px;top:135px;" width="17" height="16" viewBox="0 0 17 16"><rect x="1" y="0.5" width="7" height="7" fill="#d0d0d0"/><path d="M2.3 6.6 L4.5 1.4 L6.7 6.6 M3.2 4.8 H5.8" fill="none" stroke="#252526" stroke-width="1.1"/><path d="M1.8 9.5 H7 L2 14.5 H7.2" fill="none" stroke="#d0d0d0" stroke-width="1.6"/><path d="M12 2 V12" stroke="#d0d0d0" stroke-width="2"/><path d="M8.8 9.5 L12 14 L15.2 9.5Z" fill="#d0d0d0"/></svg>
<div class="a" style="left:1125px;top:132px;width:23px;height:22px;background:transparent;border:1px solid #3a72b0;"></div>
<svg style="left:1128px;top:135px;" width="17" height="17" viewBox="0 0 17 17"><path d="M7 1.5 H12 L15.5 5 V12.5 H6 M7 1.5 V8" fill="none" stroke="#d0d0d0" stroke-width="1.4"/><path d="M2 7.5 V10 Q2 11.8 4 11.8 Q6 11.8 6 10 V7.5Z" fill="#d0d0d0"/><rect x="3.3" y="11.5" width="1.4" height="4" fill="#d0d0d0"/></svg>
<svg style="left:1154px;top:136px;" width="11" height="15" viewBox="0 0 11 15"><path d="M4.5 0 H11 L7 5.5 H10.5 L1 15 L4 7.5 H0.5Z" fill="#d0d0d0"/></svg>
<div class="a" style="left:1174px;top:134px;width:1px;height:20px;background:#2d2d30;"></div>
<svg style="left:1181px;top:136px;" width="15" height="15" viewBox="0 0 15 15"><path d="M14.5 4.5 A4.5 4.5 0 1 1 10 0.5 A4.5 4.5 0 0 1 14.5 4.5Z M6.5 7 L1 12.5 L2.5 14.5 L8 9Z" fill="#5e5e5e"/><circle cx="11" cy="3.8" r="1.2" fill="#252526"/></svg>
<div class="a" style="left:1071px;top:157px;width:246px;height:455px;background:#252526;"></div>
<div class="a" style="left:1085px;top:176px;width:232px;height:1px;background:#2d2d30;"></div>
<svg style="left:1073px;top:162px;" width="9" height="9" viewBox="0 0 9 9"><rect x="0.5" y="0.5" width="8" height="8" fill="none" stroke="#f1f1f1"/><rect x="2" y="4" width="5" height="1" fill="#f1f1f1"/><rect x="4" y="2" width="1" height="5" fill="#f1f1f1"/></svg>
<div class="t" style="left:1089px;top:161.08px;font-size:12px;color:#f1f1f1;">(DataBindings)</div>
<div class="a" style="left:1085px;top:195px;width:232px;height:1px;background:#2d2d30;"></div>
<div class="t" style="left:1089px;top:180.08px;font-size:12px;color:#f1f1f1;">(Name)</div>
<div class="t" style="left:1202px;top:180.08px;font-size:12px;color:#f1f1f1;font-weight:bold;">pictureBox3</div>
<div class="a" style="left:1085px;top:214px;width:232px;height:1px;background:#2d2d30;"></div>
<div class="t" style="left:1089px;top:199.08px;font-size:12px;color:#f1f1f1;">AccessibleDescriptio</div>
<div class="a" style="left:1085px;top:233px;width:232px;height:1px;background:#2d2d30;"></div>
<div class="t" style="left:1089px;top:218.08px;font-size:12px;color:#f1f1f1;">AccessibleName</div>
<div class="a" style="left:1085px;top:252px;width:232px;height:1px;background:#2d2d30;"></div>
<div class="t" style="left:1089px;top:237.08px;font-size:12px;color:#f1f1f1;">AccessibleRole</div>
<div class="t" style="left:1202px;top:237.08px;font-size:12px;color:#f1f1f1;">Default</div>
<div class="a" style="left:1085px;top:271px;width:232px;height:1px;background:#2d2d30;"></div>
<div class="t" style="left:1089px;top:256.08px;font-size:12px;color:#f1f1f1;">Anchor</div>
<div class="t" style="left:1202px;top:256.08px;font-size:12px;color:#f1f1f1;">Top, Left</div>
<div class="a" style="left:1085px;top:271px;width:113px;height:19px;background:#2f2f33;"></div>
<div class="a" style="left:1085px;top:290px;width:232px;height:1px;background:#2d2d30;"></div>
<div class="t" style="left:1089px;top:275.08px;font-size:12px;color:#f1f1f1;">BackColor</div>
<div class="a" style="left:1200px;top:273px;width:21px;height:15px;background:#f0f0f0;border:1px solid #111;"></div>
<div class="a" style="left:1228px;top:271px;width:89px;height:19px;overflow:hidden"><div class="t" style="left:0;top:4.08px;font-size:12px;color:#f1f1f1">Control</div></div>
<div class="a" style="left:1085px;top:309px;width:232px;height:1px;background:#2d2d30;"></div>
<div class="t" style="left:1089px;top:294.08px;font-size:12px;color:#f1f1f1;">BackgroundImage</div>
<div class="a" style="left:1200px;top:292px;width:21px;height:15px;background:#252526;border:1px solid #111;"></div>
<div class="a" style="left:1228px;top:290px;width:89px;height:19px;overflow:hidden"><div class="t" style="left:0;top:4.08px;font-size:12px;color:#f1f1f1">(none)</div></div>
<div class="a" style="left:1085px;top:328px;width:232px;height:1px;background:#2d2d30;"></div>
<div class="t" style="left:1089px;top:313.08px;font-size:12px;color:#f1f1f1;">BackgroundImageLa</div>
<div class="t" style="left:1202px;top:313.08px;font-size:12px;color:#f1f1f1;">Tile</div>
<div class="a" style="left:1085px;top:347px;width:232px;height:1px;background:#2d2d30;"></div>
<div class="t" style="left:1089px;top:332.08px;font-size:12px;color:#f1f1f1;">BorderStyle</div>
<div class="t" style="left:1202px;top:332.08px;font-size:12px;color:#f1f1f1;">None</div>
<div class="a" style="left:1085px;top:366px;width:232px;height:1px;background:#2d2d30;"></div>
<div class="t" style="left:1089px;top:351.08px;font-size:12px;color:#f1f1f1;">ContextMenuStrip</div>
<div class="t" style="left:1202px;top:351.08px;font-size:12px;color:#f1f1f1;">(none)</div>
<div class="a" style="left:1085px;top:385px;width:232px;height:1px;background:#2d2d30;"></div>
<div class="t" style="left:1089px;top:370.08px;font-size:12px;color:#f1f1f1;">Cursor</div>
<div class="t" style="left:1202px;top:370.08px;font-size:12px;color:#f1f1f1;">Default</div>
<div class="a" style="left:1085px;top:404px;width:232px;height:1px;background:#2d2d30;"></div>
<div class="t" style="left:1089px;top:389.08px;font-size:12px;color:#f1f1f1;">Dock</div>
<div class="t" style="left:1202px;top:389.08px;font-size:12px;color:#f1f1f1;">None</div>
<div class="a" style="left:1085px;top:423px;width:232px;height:1px;background:#2d2d30;"></div>
<div class="t" style="left:1089px;top:408.08px;font-size:12px;color:#f1f1f1;">Enabled</div>
<div class="t" style="left:1202px;top:408.08px;font-size:12px;color:#f1f1f1;">True</div>
<div class="a" style="left:1085px;top:442px;width:232px;height:1px;background:#2d2d30;"></div>
<svg style="left:1073px;top:428px;" width="9" height="9" viewBox="0 0 9 9"><rect x="0.5" y="0.5" width="8" height="8" fill="none" stroke="#f1f1f1"/><rect x="2" y="4" width="5" height="1" fill="#f1f1f1"/><rect x="4" y="2" width="1" height="5" fill="#f1f1f1"/></svg>
<div class="t" style="left:1089px;top:427.08px;font-size:12px;color:#f1f1f1;">ErrorImage</div>
<div class="a" style="left:1200px;top:425px;width:21px;height:15px;background:#ffffff;border:1px solid #111;"></div>
<svg style="left:1206px;top:430px;" width="9" height="6" viewBox="0 0 9 6"><path d="M1 0.5 L8 5.5 M8 0.5 L1 5.5" stroke="#e01020" stroke-width="1.6"/></svg>
<div class="a" style="left:1228px;top:423px;width:89px;height:19px;overflow:hidden"><div class="t" style="left:0;top:4.08px;font-size:12px;color:#f1f1f1">System.Drawing.</div></div>
<div class="a" style="left:1085px;top:461px;width:232px;height:1px;background:#2d2d30;"></div>
<div class="t" style="left:1089px;top:446.08px;font-size:12px;color:#f1f1f1;">GenerateMember</div>
<div class="t" style="left:1202px;top:446.08px;font-size:12px;color:#f1f1f1;">True</div>
<div class="a" style="left:1085px;top:480px;width:232px;height:1px;background:#2d2d30;"></div>
<div class="t" style="left:1089px;top:465.08px;font-size:12px;color:#f1f1f1;">Image</div>
<div class="a" style="left:1200px;top:463px;width:21px;height:15px;background:#252526;border:1px solid #111;"></div>
<div class="a" style="left:1228px;top:461px;width:89px;height:19px;overflow:hidden"><div class="t" style="left:0;top:4.08px;font-size:12px;color:#f1f1f1">(none)</div></div>
<div class="a" style="left:1085px;top:499px;width:232px;height:1px;background:#2d2d30;"></div>
<div class="t" style="left:1089px;top:484.08px;font-size:12px;color:#f1f1f1;">ImageLocation</div>
<div class="a" style="left:1085px;top:518px;width:232px;height:1px;background:#2d2d30;"></div>
<svg style="left:1073px;top:504px;" width="9" height="9" viewBox="0 0 9 9"><rect x="0.5" y="0.5" width="8" height="8" fill="none" stroke="#f1f1f1"/><rect x="2" y="4" width="5" height="1" fill="#f1f1f1"/><rect x="4" y="2" width="1" height="5" fill="#f1f1f1"/></svg>
<div class="t" style="left:1089px;top:503.08px;font-size:12px;color:#f1f1f1;">InitialImage</div>
<div class="a" style="left:1200px;top:501px;width:21px;height:15px;background:#ffffff;border:1px solid #111;"></div>
<svg style="left:1202px;top:503px;" width="17" height="11" viewBox="0 0 17 11"><rect x="0" y="0" width="9" height="5" fill="#1f4fa0"/><rect x="0" y="0" width="4" height="2.5" fill="#e03030"/><path d="M8 5 L14 3 V10 L8 8Z" fill="#40a040"/><rect x="4" y="7" width="6" height="3" fill="#444"/></svg>
<div class="a" style="left:1228px;top:499px;width:89px;height:19px;overflow:hidden"><div class="t" style="left:0;top:4.08px;font-size:12px;color:#f1f1f1">System.Drawing.</div></div>
<div class="a" style="left:1085px;top:537px;width:232px;height:1px;background:#2d2d30;"></div>
<svg style="left:1073px;top:523px;" width="9" height="9" viewBox="0 0 9 9"><rect x="0.5" y="0.5" width="8" height="8" fill="none" stroke="#f1f1f1"/><rect x="2" y="4" width="5" height="1" fill="#f1f1f1"/><rect x="4" y="2" width="1" height="5" fill="#f1f1f1"/></svg>
<div class="t" style="left:1089px;top:522.08px;font-size:12px;color:#f1f1f1;">Location</div>
<div class="t" style="left:1202px;top:522.08px;font-size:12px;color:#f1f1f1;font-weight:bold;">384, 244</div>
<div class="a" style="left:1085px;top:556px;width:232px;height:1px;background:#2d2d30;"></div>
<div class="t" style="left:1089px;top:541.08px;font-size:12px;color:#f1f1f1;">Locked</div>
<div class="t" style="left:1202px;top:541.08px;font-size:12px;color:#f1f1f1;">False</div>
<div class="a" style="left:1085px;top:575px;width:232px;height:1px;background:#2d2d30;"></div>
<svg style="left:1073px;top:561px;" width="9" height="9" viewBox="0 0 9 9"><rect x="0.5" y="0.5" width="8" height="8" fill="none" stroke="#f1f1f1"/><rect x="2" y="4" width="5" height="1" fill="#f1f1f1"/><rect x="4" y="2" width="1" height="5" fill="#f1f1f1"/></svg>
<div class="t" style="left:1089px;top:560.08px;font-size:12px;color:#f1f1f1;">Margin</div>
<div class="t" style="left:1202px;top:560.08px;font-size:12px;color:#f1f1f1;">3, 3, 3, 3</div>
<div class="a" style="left:1085px;top:594px;width:232px;height:1px;background:#2d2d30;"></div>
<svg style="left:1073px;top:580px;" width="9" height="9" viewBox="0 0 9 9"><rect x="0.5" y="0.5" width="8" height="8" fill="none" stroke="#f1f1f1"/><rect x="2" y="4" width="5" height="1" fill="#f1f1f1"/><rect x="4" y="2" width="1" height="5" fill="#f1f1f1"/></svg>
<div class="t" style="left:1089px;top:579.08px;font-size:12px;color:#f1f1f1;">MaximumSize</div>
<div class="t" style="left:1202px;top:579.08px;font-size:12px;color:#f1f1f1;">0, 0</div>
<div class="a" style="left:1085px;top:612px;width:232px;height:1px;background:#2d2d30;"></div>
<svg style="left:1073px;top:599px;" width="9" height="9" viewBox="0 0 9 9"><rect x="0.5" y="0.5" width="8" height="8" fill="none" stroke="#f1f1f1"/><rect x="2" y="4" width="5" height="1" fill="#f1f1f1"/><rect x="4" y="2" width="1" height="5" fill="#f1f1f1"/></svg>
<div class="t" style="left:1089px;top:598.08px;font-size:12px;color:#f1f1f1;">MinimumSize</div>
<div class="t" style="left:1202px;top:598.08px;font-size:12px;color:#f1f1f1;">0, 0</div>
<div class="a" style="left:1198px;top:157px;width:1px;height:456px;background:#2d2d30;"></div>
<div class="a" style="left:1317px;top:157px;width:17px;height:455px;background:#3e3e42;"></div>
<div class="a" style="left:1321px;top:187px;width:9px;height:294px;background:#686868;"></div>
<svg style="left:1321px;top:162px;" width="10" height="5" viewBox="0 0 10 5"><path d="M0 5 L5 0 L10 5Z" fill="#999999"/></svg>
<svg style="left:1321px;top:600px;" width="10" height="5" viewBox="0 0 10 5"><path d="M0 0 L5 5 L10 0Z" fill="#999999"/></svg>
<div class="a" style="left:1070px;top:612px;width:265px;height:57px;background:#252526;"></div>
<div class="t" style="left:1076px;top:619.58px;font-size:12px;color:#f1f1f1;font-weight:bold;transform:scaleX(0.928);transform-origin:0 0;">BackColor</div>
<div class="t" style="left:1077px;top:637.58px;font-size:12px;color:#f1f1f1;">The background color of the component.</div>
<div class="t" style="left:1343px;top:85px;font-size:12px;color:#f1f1f1;writing-mode:vertical-rl;">Solution Explorer</div>
<div class="a" style="left:1360px;top:85px;width:6px;height:90px;background:#3e3e42;"></div>
<div class="a" style="left:257px;top:85px;width:147px;height:21px;background:#007acc;"></div>
<div class="a" style="left:257px;top:104px;width:807px;height:2px;background:#007acc;"></div>
<div class="t" style="left:262px;top:89.58px;font-size:12px;color:#ffffff;transform:scaleX(0.965);transform-origin:0 0;">Form1.cs [Design]*</div>
<svg style="left:371px;top:92px;" width="9" height="7" viewBox="0 0 9 7"><path d="M0 3.5 H3.5 M3.6 0 V7 M3.6 1.5 H8.2 V5.5 H3.6" fill="none" stroke="#ffffff" stroke-width="1.2"/></svg>
<svg style="left:389px;top:91px;" width="10" height="8" viewBox="0 0 10 8"><path d="M0.5 0.5 L9.5 7.5 M9.5 0.5 L0.5 7.5" stroke="#ffffff" stroke-width="1.4"/></svg>
<svg style="left:1052px;top:94px;" width="8" height="5" viewBox="0 0 8 5"><path d="M0 0 H8 L4 4.5Z" fill="#f1f1f1"/></svg>
<div class="a" style="left:257px;top:106px;width:807px;height:551px;background:#1e1e1e;"></div>
<div class="a" style="left:257px;top:122px;width:791px;height:488px;background:linear-gradient(#bccbdb,#d7e3ef 30px,#d9e4f1);border-top-right-radius:5px;box-shadow:inset 0 1px 0 #e8eef5"></div>
<div class="t" style="left:263.5px;top:134.50px;font-size:12.5px;color:#8a96a3;transform:scaleX(0.900);transform-origin:0 0;">Form1</div>
<div class="a" style="left:939px;top:131px;width:32px;height:18px;background:linear-gradient(#d6e0ea,#c6d3e0);border:1px solid #8798ab;border-radius:3px;"></div>
<div class="a" style="left:973px;top:131px;width:32px;height:18px;background:linear-gradient(#d6e0ea,#c6d3e0);border:1px solid #8798ab;border-radius:3px;"></div>
<div class="a" style="left:1007px;top:131px;width:32px;height:18px;background:linear-gradient(#d6e0ea,#c6d3e0);border:1px solid #8798ab;border-radius:3px;"></div>
<svg style="left:949px;top:138px;" width="11" height="6" viewBox="0 0 11 6"><rect x="0.5" y="1" width="10" height="4" rx="1" fill="#f4f6f8" stroke="#3c4a5a"/></svg>
<svg style="left:983px;top:134px;" width="11" height="10" viewBox="0 0 11 10"><rect x="0.5" y="0.5" width="10" height="9" rx="1" fill="none" stroke="#3c4a5a" stroke-width="1.2"/><rect x="3" y="3" width="5" height="3" fill="none" stroke="#3c4a5a" stroke-width="1.2"/></svg>
<svg style="left:1017px;top:134px;" width="12" height="10" viewBox="0 0 12 10"><path d="M1.5 1.5 L10.5 8.5 M10.5 1.5 L1.5 8.5" stroke="#3c4a5a" stroke-width="3.2" stroke-linecap="round"/><path d="M1.5 1.5 L10.5 8.5 M10.5 1.5 L1.5 8.5" stroke="#f4f6f8" stroke-width="1.6" stroke-linecap="round"/></svg>
<div class="a" style="left:257px;top:152px;width:784px;height:392px;background:#f0f0f0;"></div>
<div class="a" style="left:257px;top:544px;width:784px;height:59px;background:#000000;"></div>
<div class="a" style="left:257px;top:603px;width:784px;height:7px;background:#d9e4f1;"></div>
<div class="a" style="left:316px;top:498px;width:40px;height:43px;background:transparent;border:1px dashed #777777;"></div>
<svg style="left:310px;top:490px;" width="50" height="55" viewBox="0 0 50 55"><path d="M28.3 8.4 L45.6 8.4 L45.6 18.9 L36.0 18.9 L36.0 21.0 L41.8 21.0 L41.8 22.8 L34.0 22.8 L34.0 27.0 L37.8 27.0 L37.8 30.8 L36.0 30.8 L36.0 28.6 L34.0 28.6 L34.0 35.3 L32.0 35.3 L32.0 37.3 L30.0 37.3 L30.0 39.3 L28.2 39.3 L28.2 46.0 L31.0 46.0 L31.0 47.6 L26.5 47.6 L26.5 43.0 L21.0 43.0 L21.0 45.0 L18.0 45.0 L18.0 48.0 L19.9 48.0 L19.9 50.0 L16.3 50.0 L16.3 43.0 L14.0 43.0 L14.0 41.5 L12.0 41.5 L12.0 40.0 L10.0 40.0 L10.0 38.0 L8.0 38.0 L8.0 36.0 L6.4 36.0 L6.4 23.0 L8.0 23.0 L8.0 26.0 L10.0 26.0 L10.0 28.0 L12.0 28.0 L12.0 30.5 L16.0 30.5 L16.0 29.0 L18.0 29.0 L18.0 27.0 L20.0 27.0 L20.0 26.0 L22.0 26.0 L22.0 25.0 L24.0 25.0 L24.0 23.5 L26.5 23.5 L26.5 10.2 L28.3 10.2Z" fill="#333333"/><rect x="29.7" y="11.1" width="2.4" height="2" fill="#f0f0f0"/></svg>
<div class="a" style="left:257px;top:657px;width:807px;height:17px;background:#3e3e42;"></div>
<svg style="left:263px;top:661px;" width="5" height="9" viewBox="0 0 5 9"><path d="M5 0 V9 L0 4.5Z" fill="#999999"/></svg>
<div class="a" style="left:310px;top:661px;width:738px;height:9px;background:#686868;"></div>
<svg style="left:1053px;top:661px;" width="5" height="9" viewBox="0 0 5 9"><path d="M0 0 V9 L5 4.5Z" fill="#999999"/></svg>
<div class="a" style="left:401px;top:168px;width:562px;height:383px;box-shadow:0 0 10px 3px rgba(0,0,0,0.22)"></div>
<div class="a" style="left:401px;top:168px;width:562px;height:383px;background:#f0f0f0;"></div>
<div class="a" style="left:401px;top:168px;width:562px;height:31px;background:#ffffff;"></div>
<div class="t" style="left:410px;top:178.68px;font-size:12px;color:#000000;transform:scaleX(0.925);transform-origin:0 0;">Select Resource</div>
<div class="t" style="left:891.5px;top:175.58px;font-size:12px;color:#000000;">?</div>
<svg style="left:935px;top:178px;" width="10" height="10" viewBox="0 0 10 10"><path d="M0.5 0.5 L9.5 9.5 M9.5 0.5 L0.5 9.5" stroke="#111" stroke-width="1.1"/></svg>
<div class="a" style="left:416px;top:221px;width:211px;height:278px;background:transparent;border:1px solid #dcdcdc;"></div>
<div class="a" style="left:422px;top:214px;width:96px;height:12px;background:#f0f0f0;"></div>
<div class="t" style="left:425.5px;top:215.08px;font-size:12px;color:#000000;transform:scaleX(0.966);transform-origin:0 0;">Resource context</div>
<svg style="left:422px;top:235px;" width="14" height="14" viewBox="0 0 14 14"><circle cx="7" cy="7" r="6.3" fill="#fff" stroke="#333" stroke-width="1.2"/></svg>
<div class="t" style="left:443px;top:235.58px;font-size:12px;color:#000000;transform:scaleX(0.943);transform-origin:0 0;">Local resource:</div>
<div class="a" style="left:440px;top:258px;width:85px;height:25px;background:#cccccc;border:1px solid #bfbfbf;"></div>
<div class="t" style="left:459px;top:264.58px;font-size:12px;color:#a0a0a0;transform:scaleX(1.011);transform-origin:0 0;">Import...</div>
<div class="a" style="left:533px;top:258px;width:85px;height:25px;background:#cccccc;border:1px solid #bfbfbf;"></div>
<div class="t" style="left:562.5px;top:264.58px;font-size:12px;color:#a0a0a0;transform:scaleX(0.907);transform-origin:0 0;">Clear</div>
<svg style="left:422px;top:293px;" width="14" height="14" viewBox="0 0 14 14"><circle cx="7" cy="7" r="6.3" fill="#fff" stroke="#333" stroke-width="1.2"/><circle cx="7" cy="7" r="3.6" fill="#222"/></svg>
<div class="t" style="left:443px;top:293.58px;font-size:12px;color:#000000;transform:scaleX(0.965);transform-origin:0 0;">Project resource file:</div>
<div class="a" style="left:439px;top:315px;width:181px;height:23px;background:#e5e5e5;border:1px solid #adadad;"></div>
<div class="t" style="left:443px;top:320.08px;font-size:12px;color:#000000;transform:scaleX(0.950);transform-origin:0 0;">Properties\Resources.resx</div>
<svg style="left:606px;top:323px;" width="10" height="6" viewBox="0 0 10 6"><path d="M0.5 0.5 L5 5 L9.5 0.5" fill="none" stroke="#333" stroke-width="1.1"/></svg>
<div class="a" style="left:439px;top:344px;width:181px;height:120px;background:#ffffff;border:1px solid #828790;"></div>
<div class="a" style="left:441px;top:376px;width:177px;height:15px;background:#0078d7;outline:1px dotted #80b8e8;outline-offset:-1px;"></div>
<div class="t" style="left:443.5px;top:347.58px;font-size:12px;color:#000000;">(none)</div>
<div class="t" style="left:443.5px;top:362.58px;font-size:12px;color:#000000;">dead</div>
<div class="t" style="left:443.5px;top:377.58px;font-size:12px;color:#ffffff;">obstacle-1</div>
<div class="t" style="left:443.5px;top:392.58px;font-size:12px;color:#000000;">obstacle-2</div>
<div class="t" style="left:443.5px;top:407.58px;font-size:12px;color:#000000;">running</div>
<div class="a" style="left:440px;top:471px;width:85px;height:25px;background:#e1e1e1;border:1px solid #adadad;"></div>
<div class="t" style="left:459.5px;top:477.08px;font-size:12px;color:#000000;transform:scaleX(1.011);transform-origin:0 0;">Import...</div>
<div class="a" style="left:641px;top:213px;width:308px;height:287px;background:#ababab;border:1px solid #696969;"></div>
<div class="a" style="left:782px;top:332px;width:25px;height:48px;background:#ffffff;border:1px solid #5e5e5e;"></div>
<svg style="left:782px;top:332px;" width="25" height="48" viewBox="0 0 25 48"><path d="M9.1 1 H15.7 V47 H9.1Z" fill="#555555"/><path d="M1 14.5 Q1 13 2.8 13 Q5.6 13 5.6 14.5 V27 H9.1 V31.7 H3.5 L1 29.2Z" fill="#555555"/><path d="M24 12.5 V27.2 L21.3 31.7 H15.7 V27 H19.6 V12.5 Q19.6 11 21.8 11 Q24 11 24 12.5Z" fill="#555555"/></svg>
<div class="a" style="left:770px;top:511px;width:85px;height:25px;background:#e5f1fb;border:1px solid #0078d7;"></div>
<div class="t" style="left:806px;top:518.08px;font-size:12px;color:#000000;">OK</div>
<div class="a" style="left:863px;top:511px;width:85px;height:25px;background:#e1e1e1;border:1px solid #adadad;"></div>
<div class="t" style="left:888px;top:518.08px;font-size:12px;color:#000000;transform:scaleX(0.937);transform-origin:0 0;">Cancel</div>
<svg style="left:953px;top:541px;" width="9" height="9" viewBox="0 0 9 9"><rect x="6" y="0" width="2" height="2" fill="#b8b8b8"/><rect x="3" y="3" width="2" height="2" fill="#b8b8b8"/><rect x="6" y="3" width="2" height="2" fill="#b8b8b8"/><rect x="0" y="6" width="2" height="2" fill="#b8b8b8"/><rect x="3" y="6" width="2" height="2" fill="#b8b8b8"/><rect x="6" y="6" width="2" height="2" fill="#b8b8b8"/></svg>
<svg style="left:802px;top:513px;" width="13" height="20" viewBox="0 0 13 20"><path d="M0.5 0.5 V16 L4 12.5 L6.8 19 L9 18 L6.4 11.8 H11.5Z" fill="#ffffff" stroke="#000" stroke-width="1"/></svg>
<div class="t" style="left:5.5px;top:682.08px;font-size:12px;color:#d0d0d0;transform:scaleX(0.973);transform-origin:0 0;">Find Symbol Results</div>
<div class="a" style="left:7px;top:699px;width:105px;height:5px;background:#3f3f46;"></div>
<div class="t" style="left:123.2px;top:682.08px;font-size:12px;color:#d0d0d0;transform:scaleX(0.982);transform-origin:0 0;">Error List</div>
<div class="a" style="left:124px;top:699px;width:46px;height:5px;background:#3f3f46;"></div>
<div class="t" style="left:181.20000000000002px;top:682.08px;font-size:12px;color:#d0d0d0;transform:scaleX(1.097);transform-origin:0 0;">Output</div>
<div class="a" style="left:182px;top:699px;width:37px;height:5px;background:#3f3f46;"></div>
<div class="a" style="left:0px;top:705px;width:1366px;height:23px;background:#007acc;"></div>
<div class="t" style="left:3.2px;top:710.58px;font-size:12px;color:#ffffff;transform:scaleX(0.951);transform-origin:0 0;">Ready</div>
<div class="a" style="left:0px;top:728px;width:1366px;height:40px;background:#d7e4ea;"></div>
<svg style="left:16px;top:740px;" width="17" height="17" viewBox="0 0 17 17"><path d="M0 2.3 L7 1.3 V8 H0Z M8 1.2 L17 0 V8 H8Z M0 9 H7 V15.7 L0 14.7Z M8 9 H17 V17 L8 15.8Z" fill="#111"/></svg>
<div class="a" style="left:49px;top:729px;width:286px;height:39px;background:#ffffff;"></div>
<svg style="left:60px;top:740px;" width="17" height="17" viewBox="0 0 17 17"><circle cx="10.5" cy="6.5" r="5.5" fill="none" stroke="#222" stroke-width="1.3"/><path d="M6.5 10.5 L1 16" stroke="#222" stroke-width="1.5"/></svg>
<div class="t" style="left:87.8px;top:741.10px;font-size:15px;color:#1e1e1e;transform:scaleX(0.969);transform-origin:0 0;">Type here to search</div>
<svg style="left:270px;top:728px;" width="52" height="40" viewBox="0 0 52 40"><path d="M7.3 23.4 Q13 22 19 25 L18 32.5 Q13 30 10 27Z M45.3 23 Q39 22 33 25 L34 32.5 Q39 30 42 27Z" fill="#9a8ac8"/><path d="M7.8 5.7 Q13 6 19.5 12 L17 19 Q9 14 7.8 5.7Z M44.3 5.7 Q39 6 32.5 12 L35 19 Q43 14 44.3 5.7Z" fill="#86c6bc"/><path d="M9.5 8 Q13.5 9 17.8 13 L16 17.5 Q11 13 9.5 8Z M42.5 8 Q38.5 9 34.2 13 L36 17.5 Q41 13 42.5 8Z" fill="#e98c9c"/><ellipse cx="26" cy="23" rx="11" ry="12.5" fill="#80c4bc"/><ellipse cx="26" cy="32" rx="7" ry="4" fill="#86ccc2"/><ellipse cx="20.8" cy="21.3" rx="2.2" ry="2.9" fill="#8a4818"/><ellipse cx="31.2" cy="21.3" rx="2.2" ry="2.9" fill="#8a4818"/><path d="M23.5 25.5 H28.5 Q28.5 28 26 28 Q23.5 28 23.5 25.5Z" fill="#c04858"/><ellipse cx="23" cy="35.8" rx="1.8" ry="1" fill="#6aa8a0"/><ellipse cx="29" cy="35.8" rx="1.8" ry="1" fill="#6aa8a0"/></svg>
<svg style="left:351px;top:741px;" width="18" height="14" viewBox="0 0 18 14"><rect x="3" y="2.5" width="9" height="9" fill="none" stroke="#111" stroke-width="1.3"/><rect x="0" y="0" width="15" height="1.3" fill="#111"/><rect x="0" y="12.7" width="15" height="1.3" fill="#111"/><rect x="15.5" y="2" width="2" height="2" fill="#111"/><rect x="15.5" y="6" width="2" height="2" fill="#111"/><rect x="15.5" y="10" width="2" height="2" fill="#111"/></svg>
<svg style="left:0px;top:0px;" width="1" height="1" viewBox="0 0 1 1"><defs><linearGradient id="cpa" x1="0.7" y1="0" x2="0.2" y2="1"><stop offset="0" stop-color="#1f8ff0"/><stop offset="0.55" stop-color="#50c878"/><stop offset="1" stop-color="#f8d03a"/></linearGradient><linearGradient id="cpb" x1="0.5" y1="0" x2="0.4" y2="1"><stop offset="0" stop-color="#a050e0"/><stop offset="0.5" stop-color="#e868a8"/><stop offset="1" stop-color="#f87838"/></linearGradient></defs></svg>
<svg style="left:0;top:0" width="1366" height="768"><path d="M406 736.7 H413 Q415.5 736.7 415 739.5 L411.5 752 H402 Q399 752 399.6 749 L402.4 740 Q403.4 736.7 406 736.7Z" fill="url(#cpa)"/><path d="M409.5 741.3 H419 Q423 741.3 422.6 745 L419.8 754.5 Q418.8 757.7 415.5 757.7 H408 Q405 757.7 405.6 755 L409 743Z" fill="url(#cpb)"/><path d="M412.5 742 L409.2 751.5" stroke="#eef3f6" stroke-width="1.8"/></svg>
<svg style="left:449px;top:738px;" width="22" height="19" viewBox="0 0 22 19"><path d="M0 1.5 Q0 0.5 1 0.5 H8 Q9.5 0.5 10 2 V3.5 H0Z" fill="#e0a828"/><path d="M0 3 H21 Q22 3 22 4 V17.5 Q22 18.6 21 18.6 H1 Q0 18.6 0 17.5Z" fill="#f8d870"/><path d="M4 18.6 V12 Q4 10.5 5.5 10.5 H16 Q17.5 10.5 17.5 12 V18.6 H14 V14 H7.5 V18.6Z" fill="#3a8ad0"/></svg>
<svg style="left:497px;top:736px;" width="24" height="24" viewBox="0 0 24 24"><path d="M6 5.5 V1.5 Q6 0.6 7 0.6 H17 Q18 0.6 18 1.5 V5.5" fill="none" stroke="#3aa0e0" stroke-width="1.8"/><path d="M0 4.8 H23 V19 Q23 23.7 18.5 23.7 H4.5 Q0 23.7 0 19Z" fill="#1f5a9a"/><rect x="7.2" y="9" width="4.2" height="4.2" fill="#f25022"/><rect x="12.4" y="9" width="4.2" height="4.2" fill="#7fba00"/><rect x="7.2" y="14.2" width="4.2" height="4.2" fill="#00a4ef"/><rect x="12.4" y="14.2" width="4.2" height="4.2" fill="#ffb900"/></svg>
<div class="a" style="left:534px;top:728px;width:44px;height:40px;background:#e8eff3;"></div>
<div class="a" style="left:534px;top:766px;width:44px;height:2px;background:#606060;"></div>
<svg style="left:546px;top:735px;" width="24" height="25" viewBox="0 0 24 25"><rect x="0" y="0" width="24" height="25" fill="#68217a"/><path d="M15.5 3.5 L20 5.5 V19.5 L15.5 21.5 L8.5 15 L5.8 17 L4 16 V9 L5.8 8 L8.5 10 Z M15.5 8.5 L11.5 12.5 L15.5 16.5 Z M6 10.5 V14.5 L8 12.5 Z" fill="#fff" fill-rule="evenodd"/></svg>
<svg style="left:0;top:0" width="1366" height="768"><path d="M598 742 L607 737 Q608 736.6 609.2 737 L618.8 743.5 V757 Q618.8 758.7 617 758.7 H600 Q598 758.7 598 757Z" fill="#1a8ad8"/><path d="M609.7 741 L618.8 744 L609.7 750Z" fill="#0d58b0"/><path d="M598 749 L609.7 750.5 L618.8 745 V757 Q618.8 758.7 617 758.7 H600 Q598 758.7 598 757Z" fill="#38b8f0"/><rect x="594.9" y="741" width="14.8" height="13.9" rx="1" fill="#1466c0"/><ellipse cx="602.3" cy="748" rx="3.2" ry="3.8" fill="none" stroke="#ffffff" stroke-width="1.7"/></svg>
<svg style="left:644px;top:736px;" width="25" height="25" viewBox="0 0 25 25"><defs><linearGradient id="edg" x1="0" y1="1" x2="1" y2="0"><stop offset="0" stop-color="#0c5fb8"/><stop offset="0.45" stop-color="#1a98e0"/><stop offset="1" stop-color="#52d86a"/></linearGradient></defs><circle cx="12.5" cy="12.5" r="12" fill="url(#edg)"/><path d="M5 14 Q4.5 8 10 6.5 Q17 5 19.5 11 Q20.5 14.5 16 15 H10.5 Q11 19 16 19.5 Q20 19.8 23 17.5 Q20 24 13 24 Q6 23.5 5 14Z" fill="#0a4e9c" opacity="0.55"/><ellipse cx="13.6" cy="12.8" rx="3.4" ry="2.8" fill="#d7e4ea"/><path d="M10.2 12.5 Q11 16.5 16.5 16.8 Q19.5 16.8 22.5 15" fill="none" stroke="#0c5fb8" stroke-width="1.5"/></svg>
<svg style="left:692px;top:736px;" width="26" height="26" viewBox="0 0 26 26"><path d="M13 13 L2.17 6.75 A12.5 12.5 0 0 1 23.83 6.75Z" fill="#db4437"/><path d="M13 13 L23.83 6.75 A12.5 12.5 0 0 1 13 25.5Z" fill="#f4c20d"/><path d="M13 13 L13 25.5 A12.5 12.5 0 0 1 2.17 6.75Z" fill="#0f9d58"/><circle cx="13" cy="13" r="5.8" fill="#ffffff"/><circle cx="13" cy="13" r="4.6" fill="#4285f4"/></svg>
<div class="a" style="left:685px;top:766px;width:40px;height:2px;background:#606060;"></div>
<svg style="left:1099px;top:744px;" width="13" height="8" viewBox="0 0 13 8"><path d="M0.5 7.5 L6.5 1 L12.5 7.5" fill="none" stroke="#111" stroke-width="1.3"/></svg>
<svg style="left:1124px;top:740px;" width="12" height="16" viewBox="0 0 12 16"><rect x="0.7" y="4" width="7" height="8" rx="1" fill="none" stroke="#111" stroke-width="1.2"/><path d="M8 7 L11.5 5 V11 L8 9Z" fill="none" stroke="#111" stroke-width="1.1"/><path d="M2 1 H7 M2 15 H7" stroke="#111" stroke-width="1.1"/></svg>
<svg style="left:1147px;top:740px;" width="12" height="16" viewBox="0 0 12 16"><rect x="3" y="0" width="6" height="10" rx="3" fill="#111"/><path d="M1 7 Q1 12 6 12 Q11 12 11 7 M6 12 V15 M3 15.5 H9" fill="none" stroke="#111" stroke-width="1.2"/></svg>
<svg style="left:1168px;top:741px;" width="18" height="13" viewBox="0 0 18 13"><path d="M2 1 V3.5 M4.5 1 V3.5 M0.8 3.5 H5.7 V5.5 Q5.7 7.5 3.25 7.5 Q0.8 7.5 0.8 5.5Z M3.25 7.5 V12" fill="none" stroke="#111" stroke-width="1.1"/><path d="M5.8 3.5 H16.5 V11.3 H5.8" fill="none" stroke="#555" stroke-width="1"/><rect x="16.5" y="6" width="1.2" height="2.5" fill="#555"/><path d="M7.5 5 L11.5 9.5 M11.5 5 L7.5 9.5" stroke="#111" stroke-width="1.1"/></svg>
<svg style="left:1193px;top:740px;" width="17" height="15" viewBox="0 0 17 15"><path d="M0.6 5 H3.5 L7.5 1 V14 L3.5 10 H0.6Z" fill="none" stroke="#111" stroke-width="1.1"/><path d="M10 4.5 Q12 7.5 10 10.5 M12.5 2.5 Q15.5 7.5 12.5 12.5 M15 1 Q18.5 7.5 15 14" fill="none" stroke="#111" stroke-width="1.1"/></svg>
<div class="t" style="left:1218px;top:741.58px;font-size:12px;color:#111111;transform:scaleX(0.923);transform-origin:0 0;">ENG</div>
<div class="t" style="left:1259px;top:732.58px;font-size:12px;color:#111111;transform:scaleX(0.973);transform-origin:0 0;">6:28 PM</div>
<div class="t" style="left:1254.5px;top:750.08px;font-size:12px;color:#111111;">4/17/2025</div>
<svg style="left:1325px;top:740px;" width="17" height="16" viewBox="0 0 17 16"><path d="M0 0 H17 V12 H8 L4 16 V12 H0Z" fill="#111"/><path d="M3 3 H13 M3 6 H13 M3 9 H9" stroke="#d7e4ea" stroke-width="1.1"/><circle cx="13" cy="13" r="3" fill="#d7e4ea"/><path d="M11.5 14.5 L14.5 11.5" stroke="#111" stroke-width="1"/></svg>
<div class="a" style="left:1360px;top:728px;width:6px;height:40px;background:#e6edf3;"></div>
<div class="a" style="left:991px;top:669px;width:360px;height:59px;background:#4a4a4a"></div>
<div class="a" style="left:992px;top:670px;width:48px;height:58px;background:linear-gradient(#b8b8b8,#7c7c7c)"></div>
<div class="a" style="left:1004px;top:686px;width:24px;height:24px;background:#e0001b;box-shadow:0 0 3px 2px rgba(255,255,255,0.7)"></div>
<div class="a" style="left:1041px;top:670px;width:28px;height:28px;background:linear-gradient(#b0b0b0,#7c7c7c)"></div>
<svg style="left:1045px;top:676px;" width="20" height="16" viewBox="0 0 20 16"><rect x="0" y="3" width="20" height="13" rx="1.5" fill="#4a5a7a"/><rect x="3" y="0" width="7" height="4" rx="1" fill="#4a5a7a"/><circle cx="10" cy="9.5" r="5" fill="#6a78b0" stroke="#2a3550" stroke-width="1.5"/><circle cx="17" cy="5.5" r="1" fill="#f0e060"/></svg>
<div class="a" style="left:1041px;top:699px;width:28px;height:29px;background:linear-gradient(#b0b0b0,#7c7c7c)"></div>
<div class="a" style="left:1048px;top:705px;width:6px;height:15px;background:#4a8cc8;box-shadow:0 0 2px 1px rgba(255,255,255,0.6)"></div>
<div class="a" style="left:1057px;top:705px;width:6px;height:15px;background:#4a8cc8;box-shadow:0 0 2px 1px rgba(255,255,255,0.6)"></div>
<div class="a" style="left:1070px;top:670px;width:77px;height:58px;background:#000000;"></div>
<svg style="left:1075px;top:690px;" width="70" height="17" viewBox="0 0 70 17"><g transform="skewX(-6)" fill="#66cc66"><path d="M0 0 L8 0" stroke="#66cc66" stroke-width="1.3" stroke-dasharray="6 1.2" fill="none"/><path d="M8 0 L8 8" stroke="#66cc66" stroke-width="1.3" stroke-dasharray="6 1.2" fill="none"/><path d="M8 8 L8 16" stroke="#66cc66" stroke-width="1.3" stroke-dasharray="6 1.2" fill="none"/><path d="M0 16 L8 16" stroke="#66cc66" stroke-width="1.3" stroke-dasharray="6 1.2" fill="none"/><path d="M0 8 L0 16" stroke="#66cc66" stroke-width="1.3" stroke-dasharray="6 1.2" fill="none"/><path d="M0 0 L0 8" stroke="#66cc66" stroke-width="1.3" stroke-dasharray="6 1.2" fill="none"/><path d="M1 15 L7 1" stroke="#66cc66" stroke-width="1.2" fill="none"/><path d="M10.5 0 L18.5 0" stroke="#66cc66" stroke-width="1.3" stroke-dasharray="6 1.2" fill="none"/><path d="M18.5 0 L18.5 8" stroke="#66cc66" stroke-width="1.3" stroke-dasharray="6 1.2" fill="none"/><path d="M18.5 8 L18.5 16" stroke="#66cc66" stroke-width="1.3" stroke-dasharray="6 1.2" fill="none"/><path d="M10.5 16 L18.5 16" stroke="#66cc66" stroke-width="1.3" stroke-dasharray="6 1.2" fill="none"/><path d="M10.5 8 L10.5 16" stroke="#66cc66" stroke-width="1.3" stroke-dasharray="6 1.2" fill="none"/><path d="M10.5 0 L10.5 8" stroke="#66cc66" stroke-width="1.3" stroke-dasharray="6 1.2" fill="none"/><path d="M11.5 15 L17.5 1" stroke="#66cc66" stroke-width="1.2" fill="none"/><rect x="21.5" y="5" width="1.5" height="1.5"/><rect x="21.5" y="12" width="1.5" height="1.5"/><path d="M24.5 0 L32.5 0" stroke="#66cc66" stroke-width="1.3" stroke-dasharray="6 1.2" fill="none"/><path d="M32.5 0 L32.5 8" stroke="#66cc66" stroke-width="1.3" stroke-dasharray="6 1.2" fill="none"/><path d="M32.5 8 L32.5 16" stroke="#66cc66" stroke-width="1.3" stroke-dasharray="6 1.2" fill="none"/><path d="M24.5 16 L32.5 16" stroke="#66cc66" stroke-width="1.3" stroke-dasharray="6 1.2" fill="none"/><path d="M24.5 8 L24.5 16" stroke="#66cc66" stroke-width="1.3" stroke-dasharray="6 1.2" fill="none"/><path d="M24.5 0 L24.5 8" stroke="#66cc66" stroke-width="1.3" stroke-dasharray="6 1.2" fill="none"/><path d="M25.5 15 L31.5 1" stroke="#66cc66" stroke-width="1.2" fill="none"/><path d="M35.0 0 L43.0 0" stroke="#66cc66" stroke-width="1.3" stroke-dasharray="6 1.2" fill="none"/><path d="M35.0 0 L35.0 8" stroke="#66cc66" stroke-width="1.3" stroke-dasharray="6 1.2" fill="none"/><path d="M35.0 8 L43.0 8" stroke="#66cc66" stroke-width="1.3" stroke-dasharray="6 1.2" fill="none"/><path d="M43.0 8 L43.0 16" stroke="#66cc66" stroke-width="1.3" stroke-dasharray="6 1.2" fill="none"/><path d="M35.0 16 L43.0 16" stroke="#66cc66" stroke-width="1.3" stroke-dasharray="6 1.2" fill="none"/><rect x="46.0" y="5" width="1.5" height="1.5"/><rect x="46.0" y="12" width="1.5" height="1.5"/><path d="M49.0 0 L57.0 0" stroke="#66cc66" stroke-width="1.3" stroke-dasharray="6 1.2" fill="none"/><path d="M49.0 0 L49.0 8" stroke="#66cc66" stroke-width="1.3" stroke-dasharray="6 1.2" fill="none"/><path d="M49.0 8 L57.0 8" stroke="#66cc66" stroke-width="1.3" stroke-dasharray="6 1.2" fill="none"/><path d="M57.0 8 L57.0 16" stroke="#66cc66" stroke-width="1.3" stroke-dasharray="6 1.2" fill="none"/><path d="M49.0 16 L57.0 16" stroke="#66cc66" stroke-width="1.3" stroke-dasharray="6 1.2" fill="none"/><path d="M59.5 0 L67.5 0" stroke="#66cc66" stroke-width="1.3" stroke-dasharray="6 1.2" fill="none"/><path d="M67.5 0 L67.5 8" stroke="#66cc66" stroke-width="1.3" stroke-dasharray="6 1.2" fill="none"/><path d="M67.5 8 L67.5 16" stroke="#66cc66" stroke-width="1.3" stroke-dasharray="6 1.2" fill="none"/></g></svg>
<div class="a" style="left:1148px;top:670px;width:115px;height:28px;background:linear-gradient(#8a8a8a,#5a5a5a)"></div>
<div class="t" style="left:1171px;top:678.00px;font-size:12.5px;color:#ffffff;transform:scaleX(1.073);transform-origin:0 0;text-shadow:0 0 2px #000;">1366 × 768</div>
<div class="a" style="left:1264px;top:670px;width:28px;height:28px;background:linear-gradient(#d8d8d8,#a8a8a8)"></div>
<div class="a" style="left:1269px;top:677px;width:18px;height:14px;background:transparent;border:2px solid #3cc83c;"></div>
<div class="a" style="left:1293px;top:670px;width:28px;height:28px;background:linear-gradient(#8a8a8a,#5e5e5e)"></div>
<div class="a" style="left:1299px;top:686px;width:14px;height:3px;background:#5a9ad8;"></div>
<div class="a" style="left:1322px;top:670px;width:28px;height:28px;background:linear-gradient(#8a8a8a,#5e5e5e)"></div>
<svg style="left:1330px;top:678px;" width="12" height="12" viewBox="0 0 12 12"><path d="M1 1 L11 11 M11 1 L1 11" stroke="#e0101e" stroke-width="2.2"/></svg>
<div class="a" style="left:1148px;top:699px;width:28px;height:28px;background:linear-gradient(#e8e8e8,#b8b8b8)"></div>
<div class="a" style="left:1177px;top:699px;width:28px;height:28px;background:linear-gradient(#e8e8e8,#b8b8b8)"></div>
<div class="a" style="left:1206px;top:699px;width:28px;height:28px;background:linear-gradient(#909090,#666666)"></div>
<div class="a" style="left:1235px;top:699px;width:28px;height:28px;background:linear-gradient(#e8e8e8,#b8b8b8)"></div>
<div class="a" style="left:1264px;top:699px;width:28px;height:28px;background:linear-gradient(#909090,#666666)"></div>
<div class="a" style="left:1293px;top:699px;width:28px;height:28px;background:linear-gradient(#909090,#666666)"></div>
<div class="a" style="left:1322px;top:699px;width:28px;height:28px;background:linear-gradient(#909090,#666666)"></div>
<svg style="left:1152px;top:704px;" width="20" height="16" viewBox="0 0 20 16"><path d="M0.8 5 H4 L9 1 V15 L4 11 H0.8Z" fill="#a8c8e8" stroke="#3a78b0" stroke-width="1.1"/><path d="M11.5 4.5 Q13.5 8 11.5 11.5 M14 2.5 Q17 8 14 13.5 M16.5 0.5 Q20.5 8 16.5 15.5" fill="none" stroke="#3a78b0" stroke-width="1.3"/></svg>
<svg style="left:1184px;top:703px;" width="12" height="19" viewBox="0 0 12 19"><rect x="2" y="0" width="8" height="12" rx="4" fill="#8ab0d0" stroke="#3a78b0"/><path d="M0.5 8 Q0.5 14 6 14 Q11.5 14 11.5 8 M6 14 V17 M2 18 H10" fill="none" stroke="#3a78b0" stroke-width="1.2"/></svg>
<svg style="left:1211px;top:703px;" width="17" height="19" viewBox="0 0 17 19"><circle cx="8.5" cy="8" r="7.5" fill="#9ab8d0" stroke="#50708a" stroke-width="1.2"/><circle cx="8.5" cy="8" r="3.5" fill="#3a78b0"/><path d="M3 17 H14 L12 14 H5Z" fill="#50708a"/></svg>
<svg style="left:1243px;top:703px;" width="12" height="18" viewBox="0 0 12 18"><path d="M0.8 0.8 V15 L4 12 L6.8 17.5 L9 16.5 L6.5 11 H11Z" fill="#ffffff" stroke="#000" stroke-width="1.3"/></svg>
<svg style="left:1270px;top:703px;" width="16" height="19" viewBox="0 0 16 19"><path d="M13 0.5 L15.5 3 L5 14.5 L1 16 L2.5 12Z" fill="#3a9ad8" stroke="#1a5a90" stroke-width="0.8"/><path d="M1 16 L2 13.5 L3.5 15Z" fill="#222"/></svg>
<svg style="left:1297px;top:705px;" width="19" height="15" viewBox="0 0 19 15"><path d="M0 1 H6 L8 3 H17 V6 H0Z" fill="#e8c040"/><path d="M0 15 L2.5 5.5 H19 L16.5 15Z" fill="#f8d850"/></svg>
<svg style="left:1328px;top:704px;" width="17" height="17" viewBox="0 0 17 17"><circle cx="8.5" cy="8.5" r="6" fill="none" stroke="#4e6478" stroke-width="4"/><circle cx="8.5" cy="8.5" r="8" fill="none" stroke="#4e6478" stroke-width="2.5" stroke-dasharray="2.2 1.95"/><circle cx="8.5" cy="8.5" r="2.4" fill="#ffffff"/></svg>
</body></html>
